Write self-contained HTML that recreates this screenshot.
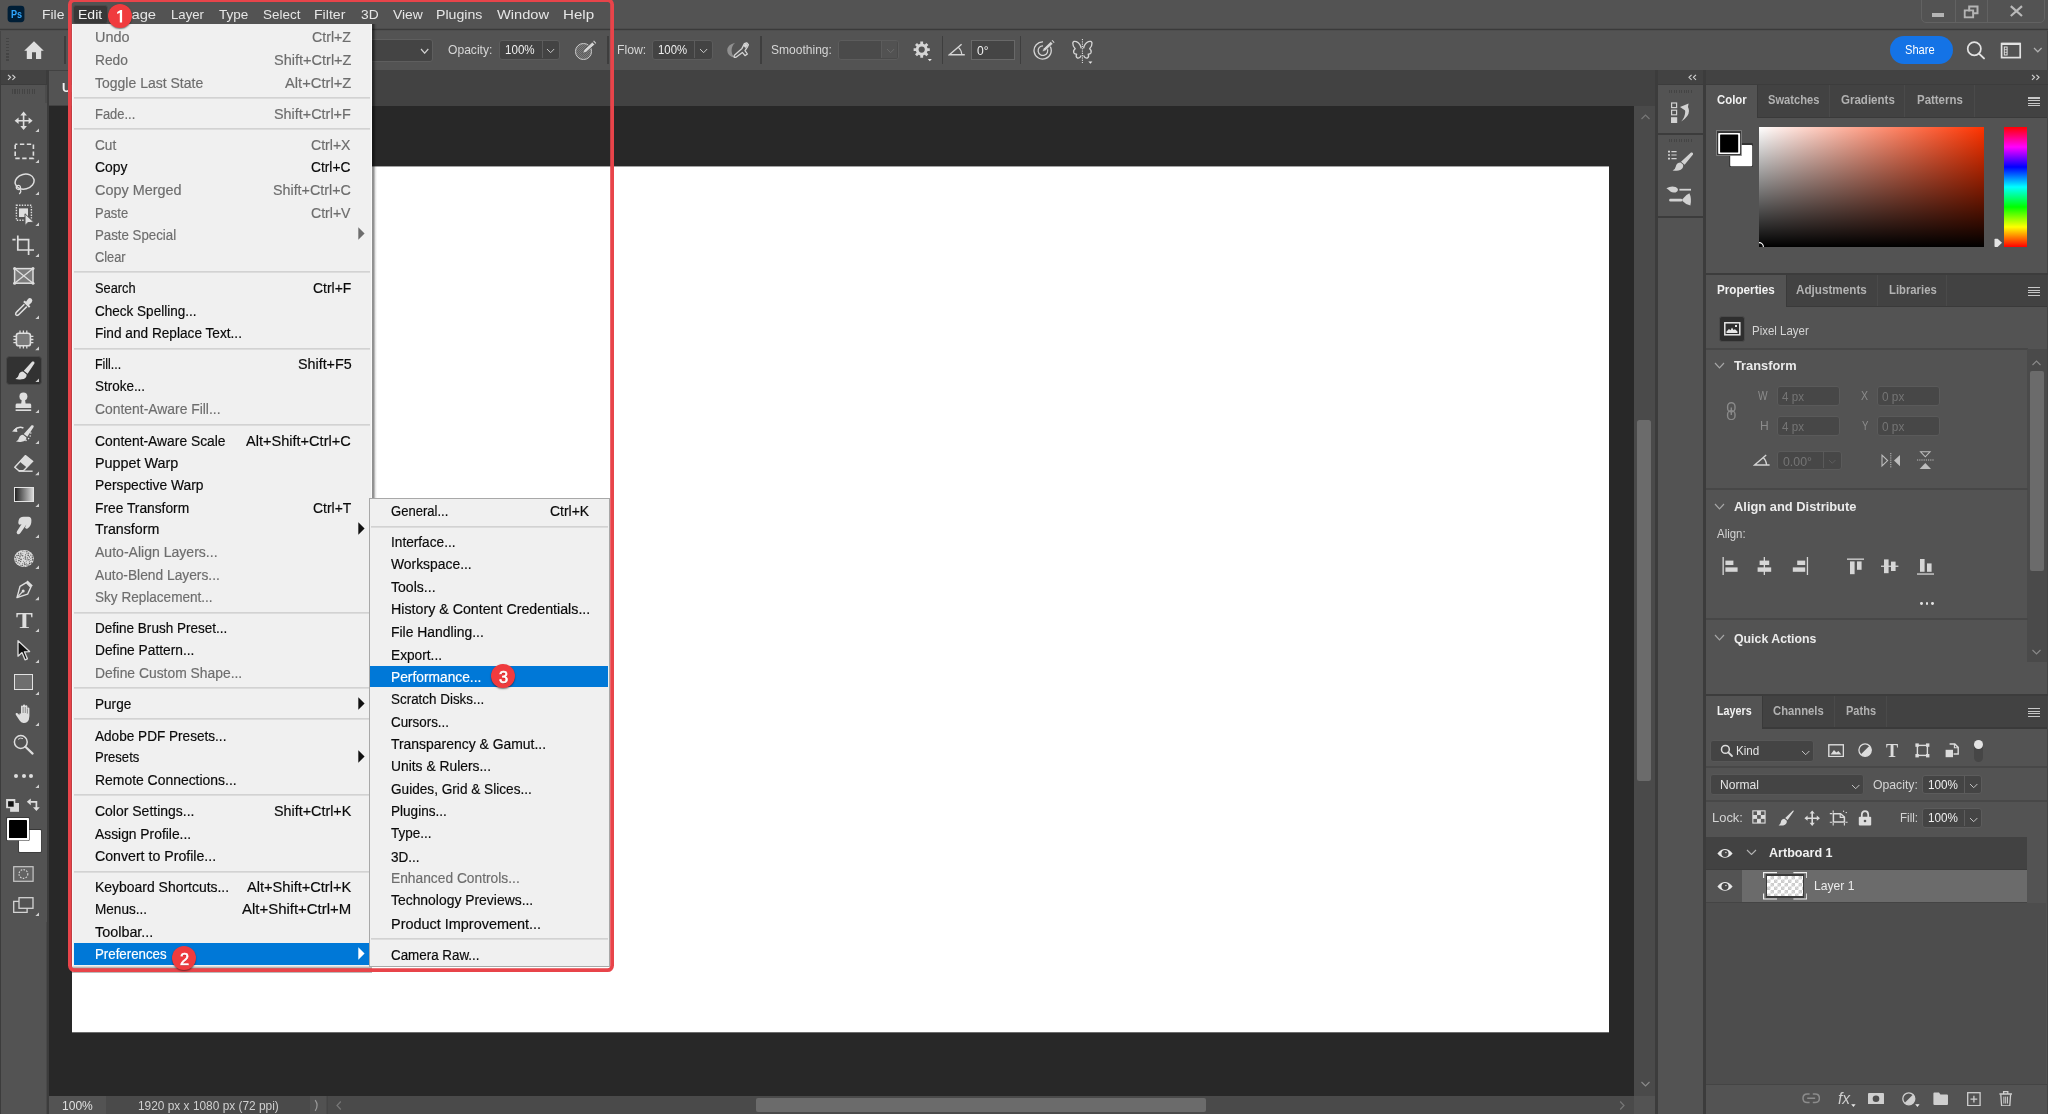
<!DOCTYPE html><html><head><meta charset="utf-8"><title>Photoshop</title><style>
html,body{margin:0;padding:0;background:#535353;}
html{width:2048px;height:1114px;overflow:hidden;}
body{width:2048px;height:1114px;position:relative;overflow:hidden;will-change:transform;font-family:"Liberation Sans",sans-serif;}
div,svg,span{position:absolute;display:block;box-sizing:border-box;}
span{white-space:pre;line-height:1;transform-origin:0 0;}
</style></head><body>
<div style="left:0px;top:0px;width:2048px;height:29px;background:#535353;"></div>
<div style="left:0px;top:28px;width:2048px;height:1px;background:#4c4c4c;"></div>
<div style="left:0px;top:29px;width:2048px;height:1px;background:#3a3a3a;"></div>
<div style="left:0px;top:30px;width:2048px;height:1px;background:#4e4e4e;"></div>
<div style="left:1px;top:31px;width:2046px;height:38.5px;background:#535353;"></div>
<div style="left:0px;top:30.5px;width:1px;height:39px;background:#454545;"></div>
<div style="left:2047px;top:30.5px;width:1px;height:39px;background:#454545;"></div>
<div style="left:0px;top:69.5px;width:2048px;height:36px;background:#424242;"></div>
<div style="left:49px;top:105.5px;width:1585px;height:990px;background:#282828;"></div>
<div style="left:72px;top:167px;width:1537px;height:865px;background:#ffffff;"></div>
<div style="left:72px;top:166px;width:1537px;height:1px;background:#a2a2a2;"></div>
<div style="left:72px;top:1032px;width:1537px;height:1px;background:#6c6c6c;"></div>
<div style="left:1634px;top:105.5px;width:20.5px;height:990px;background:#4a4a4a;"></div>
<div style="left:1637px;top:419.5px;width:14.3px;height:361.3px;background:#6b6b6b;border-radius:2.5px;"></div>
<div style="left:49px;top:1095.5px;width:1605.5px;height:18.5px;background:#4a4a4a;"></div>
<div style="left:49px;top:1095.5px;width:57px;height:18.5px;background:#535353;"></div>
<div style="left:310.3px;top:1095.5px;width:16.2px;height:18.5px;background:#515151;"></div>
<div style="left:326.5px;top:1095.5px;width:1px;height:18.5px;background:#444;"></div>
<div style="left:756px;top:1097.5px;width:449.5px;height:14.5px;background:#6b6b6b;border-radius:2px;"></div>
<div style="left:1634px;top:1095.5px;width:20.5px;height:18.5px;background:#535353;"></div>
<div style="left:0px;top:69.5px;width:49px;height:1044.5px;background:#3c3c3c;"></div>
<div style="left:1.2px;top:70.4px;width:45.2px;height:14px;background:#424242;"></div>
<div style="left:1.2px;top:85.3px;width:45.8px;height:1028.7px;background:#535353;"></div>
<div style="left:45.4px;top:85.3px;width:1.6px;height:18px;background:#4b4b4b;"></div>
<div style="left:45.6px;top:922px;width:1.4px;height:192px;background:#494949;"></div>
<div style="left:49.2px;top:71px;width:290px;height:33.5px;background:#535353;"></div>
<div style="left:1654.5px;top:69.5px;width:3px;height:1044.5px;background:#3c3c3c;"></div>
<div style="left:1657.5px;top:69.5px;width:45.5px;height:1044.5px;background:#535353;"></div>
<div style="left:1657.5px;top:69.5px;width:45.5px;height:14.5px;background:#424242;"></div>
<div style="left:1657.5px;top:84px;width:45.5px;height:1.2px;background:#3c3c3c;"></div>
<div style="left:1657.5px;top:132.8px;width:45.5px;height:1.8px;background:#3c3c3c;"></div>
<div style="left:1657.5px;top:216px;width:45.5px;height:1.8px;background:#3c3c3c;"></div>
<div style="left:1703px;top:69.5px;width:3px;height:1044.5px;background:#3c3c3c;"></div>
<div style="left:1706px;top:69.5px;width:342px;height:1044.5px;background:#535353;"></div>
<div style="left:1706px;top:69.5px;width:342px;height:14.5px;background:#424242;"></div>
<div style="left:2046.5px;top:69.5px;width:1.5px;height:1044.5px;background:#444;"></div>
<div style="left:1706px;top:83.5px;width:342px;height:1.5px;background:#3c3c3c;"></div>
<div style="left:1706px;top:85px;width:341px;height:33.3px;background:#424242;"></div>
<div style="left:1706px;top:117.3px;width:341px;height:1.2px;background:#3a3a3a;"></div>
<div style="left:1706px;top:85px;width:50.59999999999991px;height:33.8px;background:#535353;"></div>
<div style="left:1756.6px;top:85px;width:1px;height:33.3px;background:#3a3a3a;"></div>
<div style="left:1829.4px;top:85px;width:1px;height:32.3px;background:#4a4a4a;"></div>
<div style="left:1904.3px;top:85px;width:1px;height:32.3px;background:#4a4a4a;"></div>
<div style="left:1973.5px;top:85px;width:1px;height:32.3px;background:#4a4a4a;"></div>
<div style="left:2028px;top:97.3px;width:12px;height:1.3px;background:#c8c8c8;"></div>
<div style="left:2028px;top:99.89999999999999px;width:12px;height:1.3px;background:#c8c8c8;"></div>
<div style="left:2028px;top:102.5px;width:12px;height:1.3px;background:#c8c8c8;"></div>
<div style="left:2028px;top:105.1px;width:12px;height:1.3px;background:#c8c8c8;"></div>
<div style="left:1706px;top:273.1px;width:342px;height:1.5px;background:#3c3c3c;"></div>
<div style="left:1706px;top:274.6px;width:341px;height:32.7px;background:#424242;"></div>
<div style="left:1706px;top:306.3px;width:341px;height:1.2px;background:#3a3a3a;"></div>
<div style="left:1706px;top:274.6px;width:79.5px;height:33.2px;background:#535353;"></div>
<div style="left:1785.5px;top:274.6px;width:1px;height:32.7px;background:#3a3a3a;"></div>
<div style="left:1877.3px;top:274.6px;width:1px;height:31.700000000000003px;background:#4a4a4a;"></div>
<div style="left:1946.4px;top:274.6px;width:1px;height:31.700000000000003px;background:#4a4a4a;"></div>
<div style="left:2028px;top:286.90000000000003px;width:12px;height:1.3px;background:#c8c8c8;"></div>
<div style="left:2028px;top:289.50000000000006px;width:12px;height:1.3px;background:#c8c8c8;"></div>
<div style="left:2028px;top:292.1px;width:12px;height:1.3px;background:#c8c8c8;"></div>
<div style="left:2028px;top:294.70000000000005px;width:12px;height:1.3px;background:#c8c8c8;"></div>
<div style="left:1706px;top:694.2px;width:342px;height:1.5px;background:#3c3c3c;"></div>
<div style="left:1706px;top:695.7px;width:341px;height:32.7px;background:#424242;"></div>
<div style="left:1706px;top:727.4000000000001px;width:341px;height:1.2px;background:#3a3a3a;"></div>
<div style="left:1706px;top:695.7px;width:56.40000000000009px;height:33.2px;background:#535353;"></div>
<div style="left:1762.4px;top:695.7px;width:1px;height:32.7px;background:#3a3a3a;"></div>
<div style="left:1833.5px;top:695.7px;width:1px;height:31.700000000000003px;background:#4a4a4a;"></div>
<div style="left:1886.3px;top:695.7px;width:1px;height:31.700000000000003px;background:#4a4a4a;"></div>
<div style="left:2028px;top:708.0px;width:12px;height:1.3px;background:#c8c8c8;"></div>
<div style="left:2028px;top:710.6px;width:12px;height:1.3px;background:#c8c8c8;"></div>
<div style="left:2028px;top:713.2px;width:12px;height:1.3px;background:#c8c8c8;"></div>
<div style="left:2028px;top:715.8px;width:12px;height:1.3px;background:#c8c8c8;"></div>
<svg style="left:6px;top:4px;" width="20" height="20" viewBox="0 0 20 20"><rect x="1.6" y="1.8" width="16.8" height="16.4" rx="3.4" fill="#001e36"/></svg>
<span style="left:10.70px;top:9.00px;font-size:11px;color:#31a8ff;font-weight:bold;transform:scaleX(0.8248);">Ps</span>
<span style="left:41.68px;top:8.00px;font-size:13.6px;color:#e6e6e6;transform:scaleX(1.0224);">File</span>
<div style="left:73px;top:5px;width:35.3px;height:18.5px;background:#383838;border-radius:3px;border:1px solid #4a4a4a;"></div>
<span style="left:77.57px;top:8.00px;font-size:13.6px;color:#f2f2f2;transform:scaleX(1.0332);">Edit</span>
<span style="left:115.31px;top:8.00px;font-size:13.6px;color:#e6e6e6;transform:scaleX(1.0878);">Image</span>
<span style="left:170.53px;top:8.00px;font-size:13.6px;color:#e6e6e6;transform:scaleX(0.9708);">Layer</span>
<span style="left:219.30px;top:8.00px;font-size:13.6px;color:#e6e6e6;transform:scaleX(0.9927);">Type</span>
<span style="left:263.40px;top:8.00px;font-size:13.6px;color:#e6e6e6;transform:scaleX(0.9894);">Select</span>
<span style="left:314.16px;top:8.00px;font-size:13.6px;color:#e6e6e6;transform:scaleX(1.0377);">Filter</span>
<span style="left:360.50px;top:8.00px;font-size:13.6px;color:#e6e6e6;transform:scaleX(1.0137);">3D</span>
<span style="left:393.00px;top:8.00px;font-size:13.6px;color:#e6e6e6;transform:scaleX(1.0204);">View</span>
<span style="left:436.26px;top:8.00px;font-size:13.6px;color:#e6e6e6;transform:scaleX(1.0391);">Plugins</span>
<span style="left:497.40px;top:8.00px;font-size:13.6px;color:#e6e6e6;transform:scaleX(1.0756);">Window</span>
<span style="left:563.49px;top:8.00px;font-size:13.6px;color:#e6e6e6;transform:scaleX(1.1138);">Help</span>
<div style="left:1921px;top:-6px;width:123.5px;height:28.5px;border:1px solid #626262;border-radius:5px;"></div>
<div style="left:1954.5px;top:0px;width:1px;height:22px;background:#626262;"></div>
<div style="left:1987.3px;top:0px;width:1px;height:22px;background:#626262;"></div>
<div style="left:1932px;top:13px;width:12px;height:4px;background:#b4b4b4;"></div>
<svg style="left:1963px;top:5px;" width="17" height="14" viewBox="0 0 17 14"><path d="M6.2 1.5h8.3v6.8h-8.3z M1.8 5.6h8.3v6.6h-8.3z" fill="none" stroke="#b4b4b4" stroke-width="2"/><rect x="2.8" y="6.6" width="6.3" height="4.6" fill="#535353"/></svg>
<svg style="left:2009px;top:5px;" width="15" height="12" viewBox="0 0 15 12"><path d="M1.8 1.2 L13 11 M13 1.2 L1.8 11" stroke="#b9b9b9" stroke-width="2.2" fill="none"/></svg>
<div style="left:0;top:0;width:0;height:0;z-index:10;">
<div style="left:372px;top:24.3px;width:5px;height:474px;background:linear-gradient(to right,rgba(0,0,0,.44),rgba(0,0,0,.42) 36%,rgba(0,0,0,.12) 64%,rgba(0,0,0,0));"></div>
<div style="left:72px;top:24.3px;width:300.3px;height:942px;background:#fafafa;"></div>
<div style="left:73px;top:24.3px;width:298px;height:941.4px;background:#f0f0f0;"></div>
<div style="left:72px;top:966.4px;width:300px;height:3px;background:linear-gradient(to bottom,#e8e8e8,#8a8a8a);"></div>
<div style="left:72px;top:972px;width:300px;height:1px;background:#bcbcbc;"></div>
<span style="left:94.90px;top:30.00px;font-size:14.7px;color:#6d6d6d;transform:scaleX(0.9844);-webkit-text-stroke:0.18px #6d6d6d;">Undo</span>
<span style="left:312.10px;top:30.00px;font-size:14.7px;color:#6d6d6d;transform:scaleX(0.9649);-webkit-text-stroke:0.18px #6d6d6d;">Ctrl+Z</span>
<span style="left:94.90px;top:53.00px;font-size:14.7px;color:#6d6d6d;transform:scaleX(0.9386);-webkit-text-stroke:0.18px #6d6d6d;">Redo</span>
<span style="left:273.60px;top:53.00px;font-size:14.7px;color:#6d6d6d;transform:scaleX(0.9887);-webkit-text-stroke:0.18px #6d6d6d;">Shift+Ctrl+Z</span>
<span style="left:94.90px;top:76.00px;font-size:14.7px;color:#6d6d6d;transform:scaleX(0.9530);-webkit-text-stroke:0.18px #6d6d6d;">Toggle Last State</span>
<span style="left:284.80px;top:76.00px;font-size:14.7px;color:#6d6d6d;transform:scaleX(1.0025);-webkit-text-stroke:0.18px #6d6d6d;">Alt+Ctrl+Z</span>
<div style="left:74px;top:97px;width:296.3px;height:1px;background:#d2d2d2;"></div>
<div style="left:74px;top:98px;width:296.3px;height:1px;background:#dcdcdc;"></div>
<span style="left:94.90px;top:107.00px;font-size:14.7px;color:#6d6d6d;transform:scaleX(0.8804);-webkit-text-stroke:0.18px #6d6d6d;">Fade...</span>
<span style="left:274.30px;top:107.00px;font-size:14.7px;color:#6d6d6d;transform:scaleX(0.9798);-webkit-text-stroke:0.18px #6d6d6d;">Shift+Ctrl+F</span>
<div style="left:74px;top:128px;width:296.3px;height:1px;background:#d2d2d2;"></div>
<div style="left:74px;top:129px;width:296.3px;height:1px;background:#dcdcdc;"></div>
<span style="left:94.90px;top:138.00px;font-size:14.7px;color:#6d6d6d;transform:scaleX(0.9264);-webkit-text-stroke:0.18px #6d6d6d;">Cut</span>
<span style="left:311.40px;top:138.00px;font-size:14.7px;color:#6d6d6d;transform:scaleX(0.9585);-webkit-text-stroke:0.18px #6d6d6d;">Ctrl+X</span>
<span style="left:94.90px;top:160.00px;font-size:14.7px;color:#0a0a0a;transform:scaleX(0.9444);-webkit-text-stroke:0.18px #0a0a0a;">Copy</span>
<span style="left:311.40px;top:160.00px;font-size:14.7px;color:#0a0a0a;transform:scaleX(0.9359);-webkit-text-stroke:0.18px #0a0a0a;">Ctrl+C</span>
<span style="left:94.90px;top:183.00px;font-size:14.7px;color:#6d6d6d;transform:scaleX(0.9807);-webkit-text-stroke:0.18px #6d6d6d;">Copy Merged</span>
<span style="left:272.90px;top:183.00px;font-size:14.7px;color:#6d6d6d;transform:scaleX(0.9728);-webkit-text-stroke:0.18px #6d6d6d;">Shift+Ctrl+C</span>
<span style="left:94.90px;top:206.00px;font-size:14.7px;color:#6d6d6d;transform:scaleX(0.8826);-webkit-text-stroke:0.18px #6d6d6d;">Paste</span>
<span style="left:311.40px;top:206.00px;font-size:14.7px;color:#6d6d6d;transform:scaleX(0.9585);-webkit-text-stroke:0.18px #6d6d6d;">Ctrl+V</span>
<span style="left:94.90px;top:228.00px;font-size:14.7px;color:#6d6d6d;transform:scaleX(0.9034);-webkit-text-stroke:0.18px #6d6d6d;">Paste Special</span>
<svg style="left:358px;top:226.5px;" width="7" height="13" viewBox="0 0 7 13"><path d="M0.3 0.3 L6.6 6.5 L0.3 12.7z" fill="#6d6d6d"/></svg>
<span style="left:94.90px;top:250.00px;font-size:14.7px;color:#6d6d6d;transform:scaleX(0.8720);-webkit-text-stroke:0.18px #6d6d6d;">Clear</span>
<div style="left:74px;top:271px;width:296.3px;height:1px;background:#d2d2d2;"></div>
<div style="left:74px;top:272px;width:296.3px;height:1px;background:#dcdcdc;"></div>
<span style="left:94.90px;top:281.00px;font-size:14.7px;color:#0a0a0a;transform:scaleX(0.8734);-webkit-text-stroke:0.18px #0a0a0a;">Search</span>
<span style="left:312.80px;top:281.00px;font-size:14.7px;color:#0a0a0a;transform:scaleX(0.9476);-webkit-text-stroke:0.18px #0a0a0a;">Ctrl+F</span>
<span style="left:94.90px;top:304.00px;font-size:14.7px;color:#0a0a0a;transform:scaleX(0.9209);-webkit-text-stroke:0.18px #0a0a0a;">Check Spelling...</span>
<span style="left:94.90px;top:326.00px;font-size:14.7px;color:#0a0a0a;transform:scaleX(0.9294);-webkit-text-stroke:0.18px #0a0a0a;">Find and Replace Text...</span>
<div style="left:74px;top:348px;width:296.3px;height:1px;background:#d2d2d2;"></div>
<div style="left:74px;top:349px;width:296.3px;height:1px;background:#dcdcdc;"></div>
<span style="left:94.90px;top:357.00px;font-size:14.7px;color:#0a0a0a;transform:scaleX(0.8455);-webkit-text-stroke:0.18px #0a0a0a;">Fill...</span>
<span style="left:297.60px;top:357.00px;font-size:14.7px;color:#0a0a0a;transform:scaleX(0.9738);-webkit-text-stroke:0.18px #0a0a0a;">Shift+F5</span>
<span style="left:94.90px;top:379.00px;font-size:14.7px;color:#0a0a0a;transform:scaleX(0.9159);-webkit-text-stroke:0.18px #0a0a0a;">Stroke...</span>
<span style="left:94.90px;top:402.00px;font-size:14.7px;color:#6d6d6d;transform:scaleX(0.9453);-webkit-text-stroke:0.18px #6d6d6d;">Content-Aware Fill...</span>
<div style="left:74px;top:424px;width:296.3px;height:1px;background:#d2d2d2;"></div>
<div style="left:74px;top:425px;width:296.3px;height:1px;background:#dcdcdc;"></div>
<span style="left:94.90px;top:434.00px;font-size:14.7px;color:#0a0a0a;transform:scaleX(0.9425);-webkit-text-stroke:0.18px #0a0a0a;">Content-Aware Scale</span>
<span style="left:246.00px;top:434.00px;font-size:14.7px;color:#0a0a0a;transform:scaleX(0.9905);-webkit-text-stroke:0.18px #0a0a0a;">Alt+Shift+Ctrl+C</span>
<span style="left:94.90px;top:456.00px;font-size:14.7px;color:#0a0a0a;transform:scaleX(0.9787);-webkit-text-stroke:0.18px #0a0a0a;">Puppet Warp</span>
<span style="left:94.90px;top:478.00px;font-size:14.7px;color:#0a0a0a;transform:scaleX(0.9410);-webkit-text-stroke:0.18px #0a0a0a;">Perspective Warp</span>
<span style="left:94.90px;top:501.00px;font-size:14.7px;color:#0a0a0a;transform:scaleX(0.9381);-webkit-text-stroke:0.18px #0a0a0a;">Free Transform</span>
<span style="left:312.80px;top:501.00px;font-size:14.7px;color:#0a0a0a;transform:scaleX(0.9476);-webkit-text-stroke:0.18px #0a0a0a;">Ctrl+T</span>
<span style="left:94.90px;top:522.00px;font-size:14.7px;color:#0a0a0a;transform:scaleX(0.9692);-webkit-text-stroke:0.18px #0a0a0a;">Transform</span>
<svg style="left:358px;top:521.5px;" width="7" height="13" viewBox="0 0 7 13"><path d="M0.3 0.3 L6.6 6.5 L0.3 12.7z" fill="#111"/></svg>
<span style="left:94.90px;top:545.00px;font-size:14.7px;color:#6d6d6d;transform:scaleX(0.9560);-webkit-text-stroke:0.18px #6d6d6d;">Auto-Align Layers...</span>
<span style="left:94.90px;top:568.00px;font-size:14.7px;color:#6d6d6d;transform:scaleX(0.9379);-webkit-text-stroke:0.18px #6d6d6d;">Auto-Blend Layers...</span>
<span style="left:94.90px;top:590.00px;font-size:14.7px;color:#6d6d6d;transform:scaleX(0.9234);-webkit-text-stroke:0.18px #6d6d6d;">Sky Replacement...</span>
<div style="left:74px;top:612px;width:296.3px;height:1px;background:#d2d2d2;"></div>
<div style="left:74px;top:613px;width:296.3px;height:1px;background:#dcdcdc;"></div>
<span style="left:94.90px;top:621.00px;font-size:14.7px;color:#0a0a0a;transform:scaleX(0.9208);-webkit-text-stroke:0.18px #0a0a0a;">Define Brush Preset...</span>
<span style="left:94.90px;top:643.00px;font-size:14.7px;color:#0a0a0a;transform:scaleX(0.9367);-webkit-text-stroke:0.18px #0a0a0a;">Define Pattern...</span>
<span style="left:94.90px;top:666.00px;font-size:14.7px;color:#6d6d6d;transform:scaleX(0.9441);-webkit-text-stroke:0.18px #6d6d6d;">Define Custom Shape...</span>
<div style="left:74px;top:687px;width:296.3px;height:1px;background:#d2d2d2;"></div>
<div style="left:74px;top:688px;width:296.3px;height:1px;background:#dcdcdc;"></div>
<span style="left:94.90px;top:697.00px;font-size:14.7px;color:#0a0a0a;transform:scaleX(0.9251);-webkit-text-stroke:0.18px #0a0a0a;">Purge</span>
<svg style="left:358px;top:696.5px;" width="7" height="13" viewBox="0 0 7 13"><path d="M0.3 0.3 L6.6 6.5 L0.3 12.7z" fill="#111"/></svg>
<div style="left:74px;top:718px;width:296.3px;height:1px;background:#d2d2d2;"></div>
<div style="left:74px;top:719px;width:296.3px;height:1px;background:#dcdcdc;"></div>
<span style="left:94.90px;top:729.00px;font-size:14.7px;color:#0a0a0a;transform:scaleX(0.9251);-webkit-text-stroke:0.18px #0a0a0a;">Adobe PDF Presets...</span>
<span style="left:94.90px;top:750.00px;font-size:14.7px;color:#0a0a0a;transform:scaleX(0.8898);-webkit-text-stroke:0.18px #0a0a0a;">Presets</span>
<svg style="left:358px;top:749.5px;" width="7" height="13" viewBox="0 0 7 13"><path d="M0.3 0.3 L6.6 6.5 L0.3 12.7z" fill="#111"/></svg>
<span style="left:94.90px;top:773.00px;font-size:14.7px;color:#0a0a0a;transform:scaleX(0.9480);-webkit-text-stroke:0.18px #0a0a0a;">Remote Connections...</span>
<div style="left:74px;top:794px;width:296.3px;height:1px;background:#d2d2d2;"></div>
<div style="left:74px;top:795px;width:296.3px;height:1px;background:#dcdcdc;"></div>
<span style="left:94.90px;top:804.00px;font-size:14.7px;color:#0a0a0a;transform:scaleX(0.9516);-webkit-text-stroke:0.18px #0a0a0a;">Color Settings...</span>
<span style="left:273.60px;top:804.00px;font-size:14.7px;color:#0a0a0a;transform:scaleX(0.9762);-webkit-text-stroke:0.18px #0a0a0a;">Shift+Ctrl+K</span>
<span style="left:94.90px;top:827.00px;font-size:14.7px;color:#0a0a0a;transform:scaleX(0.9420);-webkit-text-stroke:0.18px #0a0a0a;">Assign Profile...</span>
<span style="left:94.90px;top:849.00px;font-size:14.7px;color:#0a0a0a;transform:scaleX(0.9636);-webkit-text-stroke:0.18px #0a0a0a;">Convert to Profile...</span>
<div style="left:74px;top:871px;width:296.3px;height:1px;background:#d2d2d2;"></div>
<div style="left:74px;top:872px;width:296.3px;height:1px;background:#dcdcdc;"></div>
<span style="left:94.90px;top:880.00px;font-size:14.7px;color:#0a0a0a;transform:scaleX(0.9496);-webkit-text-stroke:0.18px #0a0a0a;">Keyboard Shortcuts...</span>
<span style="left:246.70px;top:880.00px;font-size:14.7px;color:#0a0a0a;transform:scaleX(0.9933);-webkit-text-stroke:0.18px #0a0a0a;">Alt+Shift+Ctrl+K</span>
<span style="left:94.90px;top:902.00px;font-size:14.7px;color:#0a0a0a;transform:scaleX(0.9232);-webkit-text-stroke:0.18px #0a0a0a;">Menus...</span>
<span style="left:242.10px;top:902.00px;font-size:14.7px;color:#0a0a0a;transform:scaleX(1.0177);-webkit-text-stroke:0.18px #0a0a0a;">Alt+Shift+Ctrl+M</span>
<span style="left:94.90px;top:925.00px;font-size:14.7px;color:#0a0a0a;transform:scaleX(0.9791);-webkit-text-stroke:0.18px #0a0a0a;">Toolbar...</span>
<div style="left:74px;top:943.2px;width:295px;height:21.6px;background:#0078d7;"></div>
<span style="left:94.90px;top:947.00px;font-size:14.7px;color:#ffffff;transform:scaleX(0.9043);-webkit-text-stroke:0.18px #ffffff;">Preferences</span>
<svg style="left:358px;top:946.5px;" width="7" height="13" viewBox="0 0 7 13"><path d="M0.3 0.3 L6.6 6.5 L0.3 12.7z" fill="#ffffff"/></svg>
<div style="left:368.5px;top:497.8px;width:241.3px;height:469px;background:#a8a8a8;"></div>
<div style="left:369.5px;top:498.8px;width:239.8px;height:467.4px;background:#f0f0f0;"></div>
<span style="left:391.20px;top:504.00px;font-size:14.7px;color:#0a0a0a;transform:scaleX(0.8878);-webkit-text-stroke:0.18px #0a0a0a;">General...</span>
<span style="left:549.60px;top:504.00px;font-size:14.7px;color:#0a0a0a;transform:scaleX(0.9488);-webkit-text-stroke:0.18px #0a0a0a;">Ctrl+K</span>
<div style="left:371px;top:526px;width:236.5px;height:1px;background:#d2d2d2;"></div>
<div style="left:371px;top:527px;width:236.5px;height:1px;background:#dcdcdc;"></div>
<span style="left:391.20px;top:535.00px;font-size:14.7px;color:#0a0a0a;transform:scaleX(0.9296);-webkit-text-stroke:0.18px #0a0a0a;">Interface...</span>
<span style="left:391.20px;top:557.00px;font-size:14.7px;color:#0a0a0a;transform:scaleX(0.9448);-webkit-text-stroke:0.18px #0a0a0a;">Workspace...</span>
<span style="left:391.20px;top:580.00px;font-size:14.7px;color:#0a0a0a;transform:scaleX(0.9571);-webkit-text-stroke:0.18px #0a0a0a;">Tools...</span>
<span style="left:391.20px;top:602.00px;font-size:14.7px;color:#0a0a0a;transform:scaleX(0.9686);-webkit-text-stroke:0.18px #0a0a0a;">History &amp; Content Credentials...</span>
<span style="left:391.20px;top:625.00px;font-size:14.7px;color:#0a0a0a;transform:scaleX(0.9475);-webkit-text-stroke:0.18px #0a0a0a;">File Handling...</span>
<span style="left:391.20px;top:648.00px;font-size:14.7px;color:#0a0a0a;transform:scaleX(0.9327);-webkit-text-stroke:0.18px #0a0a0a;">Export...</span>
<div style="left:370.2px;top:666.2px;width:237.8px;height:20.6px;background:#0078d7;"></div>
<span style="left:391.20px;top:670.00px;font-size:14.7px;color:#ffffff;transform:scaleX(0.9376);-webkit-text-stroke:0.18px #ffffff;">Performance...</span>
<span style="left:391.20px;top:692.00px;font-size:14.7px;color:#0a0a0a;transform:scaleX(0.9135);-webkit-text-stroke:0.18px #0a0a0a;">Scratch Disks...</span>
<span style="left:391.20px;top:715.00px;font-size:14.7px;color:#0a0a0a;transform:scaleX(0.9109);-webkit-text-stroke:0.18px #0a0a0a;">Cursors...</span>
<span style="left:391.20px;top:737.00px;font-size:14.7px;color:#0a0a0a;transform:scaleX(0.9480);-webkit-text-stroke:0.18px #0a0a0a;">Transparency &amp; Gamut...</span>
<span style="left:391.20px;top:759.00px;font-size:14.7px;color:#0a0a0a;transform:scaleX(0.9426);-webkit-text-stroke:0.18px #0a0a0a;">Units &amp; Rulers...</span>
<span style="left:391.20px;top:782.00px;font-size:14.7px;color:#0a0a0a;transform:scaleX(0.9274);-webkit-text-stroke:0.18px #0a0a0a;">Guides, Grid &amp; Slices...</span>
<span style="left:391.20px;top:804.00px;font-size:14.7px;color:#0a0a0a;transform:scaleX(0.9236);-webkit-text-stroke:0.18px #0a0a0a;">Plugins...</span>
<span style="left:391.20px;top:826.00px;font-size:14.7px;color:#0a0a0a;transform:scaleX(0.9185);-webkit-text-stroke:0.18px #0a0a0a;">Type...</span>
<span style="left:391.20px;top:850.00px;font-size:14.7px;color:#0a0a0a;transform:scaleX(0.9219);-webkit-text-stroke:0.18px #0a0a0a;">3D...</span>
<span style="left:391.20px;top:871.00px;font-size:14.7px;color:#6d6d6d;transform:scaleX(0.9384);-webkit-text-stroke:0.18px #6d6d6d;">Enhanced Controls...</span>
<span style="left:391.20px;top:893.00px;font-size:14.7px;color:#0a0a0a;transform:scaleX(0.9468);-webkit-text-stroke:0.18px #0a0a0a;">Technology Previews...</span>
<span style="left:391.20px;top:917.00px;font-size:14.7px;color:#0a0a0a;transform:scaleX(0.9831);-webkit-text-stroke:0.18px #0a0a0a;">Product Improvement...</span>
<div style="left:371px;top:938px;width:236.5px;height:1px;background:#d2d2d2;"></div>
<div style="left:371px;top:939px;width:236.5px;height:1px;background:#dcdcdc;"></div>
<span style="left:391.20px;top:948.00px;font-size:14.7px;color:#0a0a0a;transform:scaleX(0.9110);-webkit-text-stroke:0.18px #0a0a0a;">Camera Raw...</span>
<svg style="left:60px;top:0px;" width="560" height="980" viewBox="0 0 560 980"><rect x="9.9" y="0.1" width="542.2" height="970" rx="4.5" fill="none" stroke="#e8444a" stroke-width="3.8"/></svg>
<div style="left:107.8px;top:3.700000000000001px;width:24.4px;height:24.4px;border-radius:50%;background:#f03b3e;box-shadow:0 1px 1.6px rgba(0,0,0,.5);"></div>
<svg style="left:114px;top:7.9px;" width="12" height="16" viewBox="0 0 12 16"><path d="M8.1 1.9 V14.5 H5.8 V4.7 L3.2 6.1 V4 L6.4 1.9z" fill="#fff"/></svg>
<div style="left:171.9px;top:946.0999999999999px;width:24.4px;height:24.4px;border-radius:50%;background:#f03b3e;box-shadow:0 1px 1.6px rgba(0,0,0,.5);"></div>
<span style="left:179.80px;top:951.00px;font-size:17.3px;color:#ffffff;transform:scaleX(0.9444);-webkit-text-stroke:0.65px #fff;text-shadow:0 0.7px 0.6px rgba(130,0,0,.55);">2</span>
<div style="left:491.0px;top:664.0999999999999px;width:24.4px;height:24.4px;border-radius:50%;background:#f03b3e;box-shadow:0 1px 1.6px rgba(0,0,0,.5);"></div>
<span style="left:498.90px;top:669.00px;font-size:17.3px;color:#ffffff;transform:scaleX(0.9444);-webkit-text-stroke:0.65px #fff;text-shadow:0 0.7px 0.6px rgba(130,0,0,.55);">3</span>
</div>
<div style="left:6.2px;top:38.0px;width:3px;height:1.3px;background:#444;"></div>
<div style="left:6.2px;top:41.05px;width:3px;height:1.3px;background:#444;"></div>
<div style="left:6.2px;top:44.1px;width:3px;height:1.3px;background:#444;"></div>
<div style="left:6.2px;top:47.15px;width:3px;height:1.3px;background:#444;"></div>
<div style="left:6.2px;top:50.2px;width:3px;height:1.3px;background:#444;"></div>
<div style="left:6.2px;top:53.25px;width:3px;height:1.3px;background:#444;"></div>
<div style="left:6.2px;top:56.3px;width:3px;height:1.3px;background:#444;"></div>
<div style="left:6.2px;top:59.349999999999994px;width:3px;height:1.3px;background:#444;"></div>
<svg style="left:24px;top:40.5px;" width="20" height="18.5" viewBox="0 0 20 18.5"><path d="M10 0.3 L19.8 9.8 H17.2 V18 H12 V11.3 H8 V18 H2.8 V9.8 H0.2z" fill="#dedede"/></svg>
<div style="left:64.0px;top:36px;width:1.8px;height:27.5px;background:#3e3e3e;"></div>
<div style="left:299.5px;top:38.7px;width:133.2px;height:23px;background:#444444;border:1px solid #5e5e5e;border-radius:3px;"></div>
<svg style="left:419.55px;top:48.199999999999996px;" width="9.3" height="6.2" viewBox="0 0 9.3 6.2"><path d="M1 1 L4.65 5.2 L8.3 1" fill="none" stroke="#d0d0d0" stroke-width="1.2"/></svg>
<span style="left:448.30px;top:43.00px;font-size:13px;color:#d6d6d6;transform:scaleX(0.9305);">Opacity:</span>
<div style="left:499.0px;top:39.5px;width:60.6px;height:20px;background:#434343;border:1px solid #5c5c5c;border-radius:3px;"></div>
<div style="left:541.6px;top:41px;width:1px;height:17px;background:#5c5c5c;"></div>
<span style="left:505.00px;top:44.00px;font-size:12px;color:#f0f0f0;transform:scaleX(0.9671);">100%</span>
<svg style="left:546.4px;top:47.75px;" width="9.2" height="5.7" viewBox="0 0 9.2 5.7"><path d="M1 1 L4.6 4.7 L8.2 1" fill="none" stroke="#c8c8c8" stroke-width="1.0"/></svg>
<div style="left:607.0px;top:36px;width:1.8px;height:27.5px;background:#3e3e3e;"></div>
<span style="left:616.96px;top:43.00px;font-size:13px;color:#d6d6d6;transform:scaleX(0.9407);">Flow:</span>
<div style="left:652.2px;top:39.5px;width:60.6px;height:20px;background:#434343;border:1px solid #5c5c5c;border-radius:3px;"></div>
<div style="left:694.2px;top:41px;width:1px;height:17px;background:#5c5c5c;"></div>
<span style="left:658.00px;top:44.00px;font-size:12px;color:#f0f0f0;transform:scaleX(0.9477);">100%</span>
<svg style="left:699.0px;top:47.75px;" width="9.2" height="5.7" viewBox="0 0 9.2 5.7"><path d="M1 1 L4.6 4.7 L8.2 1" fill="none" stroke="#c8c8c8" stroke-width="1.0"/></svg>
<div style="left:760.2px;top:36px;width:1.8px;height:27.5px;background:#3e3e3e;"></div>
<span style="left:771.30px;top:43.00px;font-size:13px;color:#d6d6d6;transform:scaleX(0.9256);">Smoothing:</span>
<div style="left:838.4px;top:39.5px;width:60.6px;height:20px;background:#4a4a4a;border:1px solid #5c5c5c;border-radius:3px;"></div>
<div style="left:881.2px;top:41px;width:1px;height:17px;background:#5c5c5c;"></div>
<div style="left:882.2px;top:41px;width:15.3px;height:17px;background:#525252;"></div>
<svg style="left:886.0px;top:47.75px;" width="9.2" height="5.7" viewBox="0 0 9.2 5.7"><path d="M1 1 L4.6 4.7 L8.2 1" fill="none" stroke="#6a6a6a" stroke-width="1.0"/></svg>
<div style="left:941.6px;top:36px;width:1.8px;height:27.5px;background:#3e3e3e;"></div>
<div style="left:971px;top:40px;width:43.6px;height:20px;background:#454545;border:1px solid #686868;"></div>
<span style="left:976.60px;top:45.00px;font-size:12.4px;color:#f0f0f0;transform:scaleX(0.9755);">0°</span>
<div style="left:1019.5px;top:36px;width:1.8px;height:27.5px;background:#3e3e3e;"></div>
<div style="left:1889.7px;top:35.9px;width:63.5px;height:28.2px;border-radius:14.1px;background:#1473e6;"></div>
<span style="left:1905.00px;top:44.00px;font-size:12.8px;color:#ffffff;transform:scaleX(0.8669);">Share</span>
<svg style="left:1965px;top:40px;" width="21" height="21" viewBox="0 0 21 21"><circle cx="9.3" cy="8.8" r="6.6" fill="none" stroke="#e2e2e2" stroke-width="1.7"/><path d="M14 13.6 L19 18.4" stroke="#e2e2e2" stroke-width="2" stroke-linecap="round"/></svg>
<svg style="left:2000px;top:42px;" width="22" height="17" viewBox="0 0 22 17"><rect x="1.6" y="1.6" width="18.6" height="14" fill="none" stroke="#e2e2e2" stroke-width="1.7"/><rect x="1.6" y="0.8" width="18.6" height="2.2" fill="#e2e2e2"/><rect x="4.3" y="5" width="2.8" height="8" fill="none" stroke="#e2e2e2" stroke-width="1"/><path d="M4.3 7.7h2.8M4.3 10.3h2.8" stroke="#e2e2e2" stroke-width="0.8"/></svg>
<svg style="left:2032.9px;top:47.4px;" width="9.6" height="5.8" viewBox="0 0 9.6 5.8"><path d="M1 1 L4.8 4.8 L8.6 1" fill="none" stroke="#b0b0b0" stroke-width="1.2"/></svg>
<span style="left:61.70px;top:1100.00px;font-size:12.6px;color:#e0e0e0;transform:scaleX(0.9559);">100%</span>
<span style="left:137.80px;top:1100.00px;font-size:12.4px;color:#d0d0d0;transform:scaleX(0.9598);">1920 px x 1080 px (72 ppi)</span>
<svg style="left:313px;top:1099px;" width="8" height="13" viewBox="0 0 8 13"><path d="M2.2 1.2 C4.6 4.5 4.6 8.5 2.2 11.8" fill="none" stroke="#9a9a9a" stroke-width="1.2"/></svg>
<svg style="left:335px;top:1100px;" width="8" height="11" viewBox="0 0 8 11"><path d="M5.8 1.5 L2 5.5 L5.8 9.5" fill="none" stroke="#777" stroke-width="1.2"/></svg>
<svg style="left:1618px;top:1100px;" width="8" height="11" viewBox="0 0 8 11"><path d="M2.2 1.5 L6 5.5 L2.2 9.5" fill="none" stroke="#777" stroke-width="1.2"/></svg>
<svg style="left:1640px;top:113px;" width="11" height="8" viewBox="0 0 11 8"><path d="M1.5 6 L5.5 2 L9.5 6" fill="none" stroke="#777" stroke-width="1.2"/></svg>
<svg style="left:1640px;top:1079.5px;" width="11" height="8" viewBox="0 0 11 8"><path d="M1.5 2 L5.5 6 L9.5 2" fill="none" stroke="#8a8a8a" stroke-width="1.2"/></svg>
<span style="left:61.70px;top:81.00px;font-size:13.2px;color:#f4f4f4;font-weight:bold;transform:scaleX(0.9500);">Untitled-1 @ 100% (Layer 1, RGB/8)</span>
<svg style="left:7.4px;top:74px;" width="9" height="7" viewBox="0 0 9 7"><path d="M1 0.8 L3.6 3.3 L1 5.8 M5.4 0.8 L8 3.3 L5.4 5.8" fill="none" stroke="#d0d0d0" stroke-width="1.15"/></svg>
<svg style="left:1687.8px;top:74px;" width="9" height="7" viewBox="0 0 9 7"><path d="M3.6 0.8 L1 3.3 L3.6 5.8 M8 0.8 L5.4 3.3 L8 5.8" fill="none" stroke="#d0d0d0" stroke-width="1.15"/></svg>
<svg style="left:2031.4px;top:74px;" width="9" height="7" viewBox="0 0 9 7"><path d="M1 0.8 L3.6 3.3 L1 5.8 M5.4 0.8 L8 3.3 L5.4 5.8" fill="none" stroke="#d0d0d0" stroke-width="1.15"/></svg>
<span style="left:1717.00px;top:94.00px;font-size:12.6px;color:#f2f2f2;font-weight:bold;transform:scaleX(0.9036);">Color</span>
<span style="left:1767.50px;top:94.00px;font-size:12.6px;color:#b2b2b2;font-weight:bold;transform:scaleX(0.8848);">Swatches</span>
<span style="left:1840.70px;top:94.00px;font-size:12.6px;color:#b2b2b2;font-weight:bold;transform:scaleX(0.9152);">Gradients</span>
<span style="left:1916.80px;top:94.00px;font-size:12.6px;color:#b2b2b2;font-weight:bold;transform:scaleX(0.9089);">Patterns</span>
<span style="left:1717.20px;top:284.00px;font-size:12.6px;color:#f2f2f2;font-weight:bold;transform:scaleX(0.9279);">Properties</span>
<span style="left:1796.40px;top:284.00px;font-size:12.6px;color:#b2b2b2;font-weight:bold;transform:scaleX(0.9283);">Adjustments</span>
<span style="left:1888.70px;top:284.00px;font-size:12.6px;color:#b2b2b2;font-weight:bold;transform:scaleX(0.8967);">Libraries</span>
<span style="left:1717.20px;top:705.00px;font-size:12.6px;color:#f2f2f2;font-weight:bold;transform:scaleX(0.8521);">Layers</span>
<span style="left:1773.30px;top:705.00px;font-size:12.6px;color:#b2b2b2;font-weight:bold;transform:scaleX(0.8945);">Channels</span>
<span style="left:1845.50px;top:705.00px;font-size:12.6px;color:#b2b2b2;font-weight:bold;transform:scaleX(0.8749);">Paths</span>
<svg style="left:1714px;top:128px;" width="42" height="42" viewBox="0 0 42 42"><rect x="15.2" y="15" width="23.7" height="23.9" rx="1" fill="#343434"/><rect x="16.2" y="16.9" width="22" height="21.3" rx="1" fill="#fff"/><rect x="2.1" y="2.1" width="25.7" height="25.8" fill="#808080"/><rect x="3" y="3.1" width="24" height="23.8" fill="#343434"/><rect x="4.2" y="4.9" width="21.9" height="21.2" rx="0.8" fill="#fff"/><rect x="6.1" y="6.4" width="18.1" height="18.2" rx="0.6" fill="#000"/></svg>
<div style="left:1759px;top:127px;width:225px;height:120px;background:linear-gradient(to bottom,rgba(0,0,0,0),#000),linear-gradient(to right,#fff,#ff3300);"></div>
<svg style="left:1759px;top:238px;" width="10" height="9" viewBox="0 0 10 9"><circle cx="0" cy="9" r="4.4" fill="none" stroke="#fff" stroke-width="1.1"/></svg>
<div style="left:2004px;top:127px;width:23.3px;height:120px;background:linear-gradient(to bottom,#ff0000 0%,#ff00ff 16.67%,#0000ff 33.33%,#00ffff 50%,#00ff00 66.67%,#ffff00 83.33%,#ff0000 100%);"></div>
<svg style="left:1993.5px;top:238px;" width="9" height="10" viewBox="0 0 9 10"><path d="M1.2 0.8 H3.6 L8 4.8 L3.6 8.9 H1.2 Q0.5 8.9 0.5 8.2 V1.5 Q0.5 0.8 1.2 0.8z" fill="#e4e4e4"/></svg>
<div style="left:1718.9px;top:315.8px;width:26.4px;height:26px;background:#2e2e2e;border-radius:3px;border:1px solid #4a4a4a;"></div>
<svg style="left:1724px;top:321.5px;" width="17" height="14" viewBox="0 0 17 14"><rect x="0.8" y="0.8" width="15" height="12" fill="none" stroke="#e6e6e6" stroke-width="1.5"/><path d="M2.5 11 L2.5 9.5 L5 7 L6.5 8.2 L8 5.6 L9.5 8 L11 7.2 L13.5 9.6 V11z" fill="#e6e6e6"/><rect x="11" y="3" width="2" height="2" fill="#e6e6e6"/></svg>
<span style="left:1752.32px;top:324.00px;font-size:13px;color:#d4d4d4;transform:scaleX(0.8831);">Pixel Layer</span>
<div style="left:1706px;top:348px;width:321.5px;height:2px;background:#474747;"></div>
<div style="left:2027px;top:349.4px;width:19.5px;height:312.6px;background:#4a4a4a;"></div>
<div style="left:2029.8px;top:370.6px;width:14.2px;height:200px;background:#6b6b6b;border-radius:2px;"></div>
<svg style="left:2031px;top:359px;" width="11" height="8" viewBox="0 0 11 8"><path d="M1.5 6 L5.5 2 L9.5 6" fill="none" stroke="#8a8a8a" stroke-width="1.1"/></svg>
<svg style="left:2031px;top:647.5px;" width="11" height="8" viewBox="0 0 11 8"><path d="M1.5 2 L5.5 6 L9.5 2" fill="none" stroke="#8a8a8a" stroke-width="1.1"/></svg>
<svg style="left:1713.5px;top:362.0px;" width="11" height="6.8" viewBox="0 0 11 6.8"><path d="M1 1 L5.5 5.8 L10 1" fill="none" stroke="#a6a6a6" stroke-width="1.2"/></svg>
<span style="left:1733.70px;top:359.00px;font-size:13px;color:#ebebeb;font-weight:bold;transform:scaleX(0.9855);">Transform</span>
<span style="left:1758.00px;top:389.00px;font-size:13px;color:#8c8c8c;transform:scaleX(0.7846);">W</span>
<div style="left:1777.0px;top:386.0px;width:63.2px;height:19.8px;background:#474747;border:1px solid #5a5a5a;border-radius:3px;"></div>
<span style="left:1782.00px;top:390.00px;font-size:13px;color:#757575;transform:scaleX(0.8934);">4 px</span>
<span style="left:1861.40px;top:389.00px;font-size:13px;color:#8c8c8c;transform:scaleX(0.8111);">X</span>
<div style="left:1876.8px;top:386.0px;width:63.3px;height:19.8px;background:#474747;border:1px solid #5a5a5a;border-radius:3px;"></div>
<span style="left:1881.60px;top:390.00px;font-size:13px;color:#757575;transform:scaleX(0.9094);">0 px</span>
<span style="left:1760.08px;top:419.00px;font-size:13px;color:#8c8c8c;transform:scaleX(0.9250);">H</span>
<div style="left:1777.0px;top:416.3px;width:63.2px;height:19.6px;background:#474747;border:1px solid #5a5a5a;border-radius:3px;"></div>
<span style="left:1782.00px;top:420.00px;font-size:13px;color:#757575;transform:scaleX(0.8934);">4 px</span>
<span style="left:1862.00px;top:419.00px;font-size:13px;color:#8c8c8c;transform:scaleX(0.7444);">Y</span>
<div style="left:1876.8px;top:416.3px;width:63.3px;height:19.6px;background:#474747;border:1px solid #5a5a5a;border-radius:3px;"></div>
<span style="left:1881.60px;top:420.00px;font-size:13px;color:#757575;transform:scaleX(0.9094);">0 px</span>
<div style="left:1777.0px;top:450.9px;width:64.6px;height:19px;background:#474747;border:1px solid #5a5a5a;border-radius:3px;"></div>
<div style="left:1823px;top:452.4px;width:1px;height:16px;background:#5a5a5a;"></div>
<span style="left:1782.60px;top:455.00px;font-size:13px;color:#757575;transform:scaleX(0.9504);">0.00°</span>
<svg style="left:1828.05px;top:458.85px;" width="8.5" height="5.3" viewBox="0 0 8.5 5.3"><path d="M1 1 L4.25 4.3 L7.5 1" fill="none" stroke="#5e5e5e" stroke-width="1.0"/></svg>
<div style="left:1706px;top:488px;width:321.5px;height:2px;background:#474747;"></div>
<svg style="left:1713.5px;top:502.90000000000003px;" width="11" height="6.8" viewBox="0 0 11 6.8"><path d="M1 1 L5.5 5.8 L10 1" fill="none" stroke="#a6a6a6" stroke-width="1.2"/></svg>
<span style="left:1733.70px;top:500.00px;font-size:13px;color:#ebebeb;font-weight:bold;transform:scaleX(0.9913);">Align and Distribute</span>
<span style="left:1717.20px;top:527.00px;font-size:13px;color:#d4d4d4;transform:scaleX(0.8807);">Align:</span>
<div style="left:1920.0px;top:602.4px;width:2.8px;height:2.8px;border-radius:50%;background:#e2e2e2;"></div>
<div style="left:1925.6999999999998px;top:602.4px;width:2.8px;height:2.8px;border-radius:50%;background:#e2e2e2;"></div>
<div style="left:1931.3999999999999px;top:602.4px;width:2.8px;height:2.8px;border-radius:50%;background:#e2e2e2;"></div>
<div style="left:1706px;top:618px;width:321.5px;height:2px;background:#474747;"></div>
<svg style="left:1713.5px;top:634.2px;" width="11" height="6.8" viewBox="0 0 11 6.8"><path d="M1 1 L5.5 5.8 L10 1" fill="none" stroke="#a6a6a6" stroke-width="1.2"/></svg>
<span style="left:1733.70px;top:632.00px;font-size:13px;color:#ebebeb;font-weight:bold;transform:scaleX(0.9486);">Quick Actions</span>
<div style="left:1710.3px;top:740.3px;width:103.4px;height:21.6px;background:#444444;border:1px solid #575757;border-radius:3px;"></div>
<svg style="left:1720px;top:744px;" width="14" height="14" viewBox="0 0 14 14"><circle cx="5.4" cy="5.4" r="3.9" fill="none" stroke="#dcdcdc" stroke-width="1.5"/><path d="M8.3 8.3 L12 12" stroke="#dcdcdc" stroke-width="1.8" stroke-linecap="round"/></svg>
<span style="left:1736.00px;top:744.00px;font-size:13px;color:#e4e4e4;transform:scaleX(0.8956);">Kind</span>
<svg style="left:1800.7px;top:749.75px;" width="9.4" height="5.7" viewBox="0 0 9.4 5.7"><path d="M1 1 L4.7 4.7 L8.4 1" fill="none" stroke="#c4c4c4" stroke-width="1.0"/></svg>
<div style="left:1706px;top:766px;width:341px;height:2px;background:#484848;"></div>
<div style="left:1710.3px;top:774.1px;width:154px;height:21.4px;background:#444444;border:1px solid #575757;border-radius:3px;"></div>
<span style="left:1719.67px;top:778.00px;font-size:13px;color:#e4e4e4;transform:scaleX(0.9267);">Normal</span>
<svg style="left:1851.1px;top:783.65px;" width="9.4" height="5.7" viewBox="0 0 9.4 5.7"><path d="M1 1 L4.7 4.7 L8.4 1" fill="none" stroke="#c4c4c4" stroke-width="1.0"/></svg>
<span style="left:1872.70px;top:778.00px;font-size:13px;color:#d4d4d4;transform:scaleX(0.9411);">Opacity:</span>
<div style="left:1921.8px;top:774.5px;width:60.6px;height:19.6px;background:#444444;border:1px solid #5c5c5c;border-radius:3px;"></div>
<div style="left:1964.2px;top:776px;width:1px;height:16.6px;background:#5c5c5c;"></div>
<span style="left:1927.80px;top:779.00px;font-size:12px;color:#f0f0f0;transform:scaleX(0.9735);">100%</span>
<svg style="left:1969.0px;top:783.15px;" width="9.4" height="5.7" viewBox="0 0 9.4 5.7"><path d="M1 1 L4.7 4.7 L8.4 1" fill="none" stroke="#c4c4c4" stroke-width="1.0"/></svg>
<div style="left:1706px;top:800px;width:341px;height:2px;background:#484848;"></div>
<span style="left:1712.01px;top:811.00px;font-size:13px;color:#d4d4d4;transform:scaleX(0.9946);">Lock:</span>
<span style="left:1899.51px;top:811.00px;font-size:13px;color:#d4d4d4;transform:scaleX(0.8922);">Fill:</span>
<div style="left:1921.8px;top:808.1px;width:60.6px;height:19.6px;background:#444444;border:1px solid #5c5c5c;border-radius:3px;"></div>
<div style="left:1964.2px;top:809.6px;width:1px;height:16.6px;background:#5c5c5c;"></div>
<span style="left:1927.80px;top:812.00px;font-size:12px;color:#f0f0f0;transform:scaleX(0.9735);">100%</span>
<svg style="left:1969.0px;top:816.65px;" width="9.4" height="5.7" viewBox="0 0 9.4 5.7"><path d="M1 1 L4.7 4.7 L8.4 1" fill="none" stroke="#c4c4c4" stroke-width="1.0"/></svg>
<div style="left:1706px;top:837px;width:321.3px;height:247px;background:#4d4d4d;"></div>
<div style="left:2027.3px;top:902.8px;width:19.2px;height:181px;background:#4d4d4d;"></div>
<div style="left:1706px;top:837px;width:321.3px;height:32.3px;background:#424242;"></div>
<div style="left:1706px;top:869.6px;width:321.3px;height:32.6px;background:#535353;"></div>
<div style="left:1742.3px;top:869.6px;width:285px;height:32.6px;background:#6b6b6b;"></div>
<div style="left:1706px;top:869px;width:321.3px;height:0.9px;background:#3c3c3c;"></div>
<div style="left:1706px;top:902px;width:321.3px;height:0.9px;background:#444;"></div>
<span style="left:1769.40px;top:846.00px;font-size:13px;color:#f0f0f0;font-weight:bold;transform:scaleX(0.9679);">Artboard 1</span>
<span style="left:1814.47px;top:879.00px;font-size:13px;color:#ececec;transform:scaleX(0.9328);">Layer 1</span>
<svg style="left:1745.8px;top:848.95px;" width="11" height="6.5" viewBox="0 0 11 6.5"><path d="M1 1 L5.5 5.5 L10 1" fill="none" stroke="#b4b4b4" stroke-width="1.1"/></svg>
<div style="left:1766px;top:874px;width:38.4px;height:23.6px;background:#3a3a3a;"></div>
<div style="left:1767px;top:876px;width:36.4px;height:20.2px;background-color:#fff;background-image:linear-gradient(45deg,#ccc 25%,transparent 25%,transparent 75%,#ccc 75%),linear-gradient(45deg,#ccc 25%,transparent 25%,transparent 75%,#ccc 75%);background-size:7px 7px;background-position:0 0,3.5px 3.5px;"></div>
<svg style="left:1763px;top:872px;" width="44.4" height="27.6" viewBox="0 0 44.4 27.6"><path d="M0.6 6 V0.6 H14 M30.4 0.6 H43.8 V6 M43.8 21.6 V27 H30.4 M14 27 H0.6 V21.6" fill="none" stroke="#f0f0f0" stroke-width="1.2"/></svg>
<div style="left:1706px;top:1083.6px;width:341px;height:1.6px;background:#444;"></div>
<div style="left:1706px;top:1085.2px;width:341px;height:28.8px;background:#535353;"></div>
<div style="left:12.0px;top:89.3px;width:1.1px;height:4.6px;background:#444;"></div>
<div style="left:14.45px;top:89.3px;width:1.1px;height:4.6px;background:#444;"></div>
<div style="left:16.9px;top:89.3px;width:1.1px;height:4.6px;background:#444;"></div>
<div style="left:19.35px;top:89.3px;width:1.1px;height:4.6px;background:#444;"></div>
<div style="left:21.8px;top:89.3px;width:1.1px;height:4.6px;background:#444;"></div>
<div style="left:24.25px;top:89.3px;width:1.1px;height:4.6px;background:#444;"></div>
<div style="left:26.700000000000003px;top:89.3px;width:1.1px;height:4.6px;background:#444;"></div>
<div style="left:29.150000000000002px;top:89.3px;width:1.1px;height:4.6px;background:#444;"></div>
<div style="left:31.6px;top:89.3px;width:1.1px;height:4.6px;background:#444;"></div>
<div style="left:34.05px;top:89.3px;width:1.1px;height:4.6px;background:#444;"></div>
<svg style="left:14px;top:111px;" width="20" height="20" viewBox="0 0 20 20"><g fill="#dedede" stroke="none"><path d="M9.6 0.6 L12.9 4.6 H10.4 V9 H14.6 V6.5 L18.6 9.8 L14.6 13.1 V10.6 H10.4 V15 H12.9 L9.6 19 L6.3 15 H8.8 V10.6 H4.6 V13.1 L0.6 9.8 L4.6 6.5 V9 H8.8 V4.6 H6.3z"/></g></svg>
<svg style="left:34.8px;top:127.8px;" width="4.4" height="4.4" viewBox="0 0 4.4 4.4"><path d="M4.2 0.2 V4.2 H0.2z" fill="#cfcfcf"/></svg>
<svg style="left:13.6px;top:143.4px;" width="21" height="17" viewBox="0 0 21 17"><rect x="1.2" y="1.2" width="18.2" height="14.2" fill="none" stroke="#dedede" stroke-width="1.6" stroke-dasharray="4.4 2.5" stroke-dashoffset="2.2"/></svg>
<svg style="left:34.8px;top:159px;" width="4.4" height="4.4" viewBox="0 0 4.4 4.4"><path d="M4.2 0.2 V4.2 H0.2z" fill="#cfcfcf"/></svg>
<svg style="left:13.6px;top:173px;" width="22" height="22" viewBox="0 0 22 22"><ellipse cx="10.6" cy="8.6" rx="9.6" ry="7.4" fill="none" stroke="#dedede" stroke-width="1.5" transform="rotate(-14 10.6 8.6)"/><circle cx="4.4" cy="14.4" r="2.1" fill="none" stroke="#dedede" stroke-width="1.3"/><path d="M5.6 16 C7.4 17.4 7.2 19.4 5.2 21" fill="none" stroke="#dedede" stroke-width="1.3"/></svg>
<svg style="left:34.8px;top:190.6px;" width="4.4" height="4.4" viewBox="0 0 4.4 4.4"><path d="M4.2 0.2 V4.2 H0.2z" fill="#cfcfcf"/></svg>
<svg style="left:15px;top:203.6px;" width="20" height="23" viewBox="0 0 20 23"><rect x="1.4" y="1.2" width="15" height="15" fill="none" stroke="#dedede" stroke-width="1.4" stroke-dasharray="1.4 1.3"/><rect x="4" y="4.4" width="9" height="8.6" fill="#dedede"/><path d="M10 9.8 L10 21.4 L13 18.6 L18.8 18.2z" fill="#dedede" stroke="#535353" stroke-width="1"/></svg>
<svg style="left:34.8px;top:221.8px;" width="4.4" height="4.4" viewBox="0 0 4.4 4.4"><path d="M4.2 0.2 V4.2 H0.2z" fill="#cfcfcf"/></svg>
<svg style="left:12px;top:235px;" width="23" height="21" viewBox="0 0 23 21"><path d="M0.4 4.6 H3.6 M5.8 0.6 V15 H20.2 M5.8 4.6 H16.6 V20 M16.6 15 H22" fill="none" stroke="#dedede" stroke-width="1.7"/></svg>
<svg style="left:34.8px;top:252.6px;" width="4.4" height="4.4" viewBox="0 0 4.4 4.4"><path d="M4.2 0.2 V4.2 H0.2z" fill="#cfcfcf"/></svg>
<svg style="left:13.4px;top:267.4px;" width="22" height="18" viewBox="0 0 22 18"><rect x="1.6" y="1.6" width="18.4" height="14.6" fill="#7c7c7c" stroke="#dedede" stroke-width="1.5"/><path d="M1.6 1.6 L20 16.2 M20 1.6 L1.6 16.2" stroke="#dedede" stroke-width="1.3"/><g fill="#dedede"><circle cx="1.6" cy="1.6" r="1.5"/><circle cx="20" cy="1.6" r="1.5"/><circle cx="1.6" cy="16.2" r="1.5"/><circle cx="20" cy="16.2" r="1.5"/></g></svg>
<svg style="left:14px;top:297.4px;" width="20" height="20" viewBox="0 0 20 20"><path d="M10.4 7.2 L3 14.6 Q1.6 16 1.6 17.2 Q1.8 18.4 3 18.4 Q4.2 18.4 5.4 17 L12.8 9.6" fill="none" stroke="#dedede" stroke-width="1.5"/><path d="M9.2 5 L10.8 3.6 L12 4.8 L14 2 Q15.6 0.2 17.6 1.8 Q19.2 3.6 17.6 5.4 L15 8 L16.4 9.4 L15 10.8z" fill="#dedede"/></svg>
<svg style="left:34.8px;top:315px;" width="4.4" height="4.4" viewBox="0 0 4.4 4.4"><path d="M4.2 0.2 V4.2 H0.2z" fill="#cfcfcf"/></svg>
<svg style="left:13px;top:329.6px;" width="21" height="19" viewBox="0 0 21 19"><rect x="3.4" y="3.2" width="14" height="12.6" rx="2.4" fill="#7a7a7a" stroke="#dedede" stroke-width="1.6"/><path d="M7 0.4 V3 M10.4 0.4 V3 M13.8 0.4 V3 M7 16 V18.6 M10.4 16 V18.6 M13.8 16 V18.6 M0.4 6.4 H3 M0.4 9.5 H3 M0.4 12.6 H3 M17.8 6.4 H20.4 M17.8 9.5 H20.4 M17.8 12.6 H20.4" stroke="#dedede" stroke-width="1.3"/></svg>
<svg style="left:34.8px;top:346.2px;" width="4.4" height="4.4" viewBox="0 0 4.4 4.4"><path d="M4.2 0.2 V4.2 H0.2z" fill="#cfcfcf"/></svg>
<div style="left:5.8px;top:355.8px;width:36.2px;height:28.8px;background:#323232;border-radius:3.5px;border:1px solid #484848;"></div>
<svg style="left:14.8px;top:360.6px;" width="20" height="19" viewBox="0 0 20 19"><path d="M17.2 0.6 Q19.9 -0.2 19.4 2.4 L12.6 12.8 L8.8 9.8z M8 10.6 L11.6 13.6 Q11.8 17.6 6.6 18.3 Q3.4 18.8 0.4 18 Q3.2 16.6 3.6 14.2 Q4.4 10.8 8 10.6z" fill="#dedede"/></svg>
<svg style="left:34.8px;top:377.6px;" width="4.4" height="4.4" viewBox="0 0 4.4 4.4"><path d="M4.2 0.2 V4.2 H0.2z" fill="#cfcfcf"/></svg>
<svg style="left:15.4px;top:391.6px;" width="17" height="20" viewBox="0 0 17 20"><circle cx="8.4" cy="4.4" r="4" fill="#dedede"/><path d="M6.8 7.6 H10 L10.6 11.6 H14.6 Q16.2 11.6 16.2 13 V16 H0.6 V13 Q0.6 11.6 2.2 11.6 H6.2z" fill="#dedede"/><rect x="0.6" y="17.4" width="15.6" height="1.6" fill="#dedede"/></svg>
<svg style="left:34.8px;top:408.6px;" width="4.4" height="4.4" viewBox="0 0 4.4 4.4"><path d="M4.2 0.2 V4.2 H0.2z" fill="#cfcfcf"/></svg>
<svg style="left:12px;top:423.6px;" width="22" height="20" viewBox="0 0 22 20"><g transform="translate(3.6 0.8) scale(0.93)"><path d="M17.2 0.6 Q19.9 -0.2 19.4 2.4 L12.6 12.8 L8.8 9.8z M8 10.6 L11.6 13.6 Q11.8 17.6 6.6 18.3 Q3.4 18.8 0.4 18 Q3.2 16.6 3.6 14.2 Q4.4 10.8 8 10.6z" fill="#dedede"/></g><path d="M2 6.4 Q6.6 1.6 11.4 4" fill="none" stroke="#dedede" stroke-width="1.4"/><path d="M0 7.6 L4.6 3.6 L5.4 8z" fill="#dedede"/><g fill="#dedede"><circle cx="14" cy="16.4" r="0.8"/><circle cx="16.6" cy="14.6" r="0.8"/><circle cx="18.2" cy="12" r="0.8"/><circle cx="18.8" cy="9" r="0.8"/></g></svg>
<svg style="left:34.8px;top:440px;" width="4.4" height="4.4" viewBox="0 0 4.4 4.4"><path d="M4.2 0.2 V4.2 H0.2z" fill="#cfcfcf"/></svg>
<svg style="left:14px;top:455px;" width="20" height="18" viewBox="0 0 20 18"><path d="M11.4 0.6 L18.6 6.4 L9.6 15.6 H4.6 L0.8 12.2z" fill="none" stroke="#dedede" stroke-width="1.4"/><path d="M11.4 0.6 L18.6 6.4 L12.8 12.4 L5.6 6.6z" fill="#dedede"/><path d="M4.6 16.2 H18.6" stroke="#dedede" stroke-width="1.4"/></svg>
<svg style="left:34.8px;top:471.2px;" width="4.4" height="4.4" viewBox="0 0 4.4 4.4"><path d="M4.2 0.2 V4.2 H0.2z" fill="#cfcfcf"/></svg>
<div style="left:14.3px;top:486.6px;width:19.4px;height:15.4px;border:1.4px solid #e4e4e4;background:linear-gradient(to right,#222,#d8d8d8);"></div>
<svg style="left:34.8px;top:502.6px;" width="4.4" height="4.4" viewBox="0 0 4.4 4.4"><path d="M4.2 0.2 V4.2 H0.2z" fill="#cfcfcf"/></svg>
<svg style="left:16px;top:516.4px;" width="17" height="20" viewBox="0 0 17 20"><path d="M2.6 4.4 Q3.4 1 7.6 0.8 H12.4 Q15.4 1 15.4 4.4 Q15.6 10 11.6 12.4 Q9.6 13.4 9 11.6 L10.4 8.6 L4.4 17 Q3 18.8 1.4 18 Q0 17 1 15.2 L5.6 8 Q3.4 9.4 2.6 8 Q2 6.4 2.6 4.4z" fill="#dedede"/></svg>
<svg style="left:34.8px;top:533.6px;" width="4.4" height="4.4" viewBox="0 0 4.4 4.4"><path d="M4.2 0.2 V4.2 H0.2z" fill="#cfcfcf"/></svg>
<svg style="left:14.3px;top:549.6px;" width="20" height="17.2" viewBox="0 0 20 17.2"><ellipse cx="10" cy="8.6" rx="9.9" ry="8.5" fill="#dcdcdc"/><circle cx="6.8" cy="3.2" r="0.71" fill="#5a5a5a"/><circle cx="2.1" cy="9.2" r="0.60" fill="#5a5a5a"/><circle cx="8.6" cy="13.7" r="0.50" fill="#5a5a5a"/><circle cx="4.9" cy="10.6" r="0.83" fill="#5a5a5a"/><circle cx="11.4" cy="7.0" r="0.84" fill="#5a5a5a"/><circle cx="3.0" cy="5.6" r="0.78" fill="#5a5a5a"/><circle cx="10.9" cy="1.8" r="0.47" fill="#5a5a5a"/><circle cx="8.7" cy="5.7" r="0.68" fill="#5a5a5a"/><circle cx="15.4" cy="11.7" r="0.55" fill="#5a5a5a"/><circle cx="11.4" cy="9.0" r="0.80" fill="#5a5a5a"/><circle cx="14.2" cy="5.3" r="0.84" fill="#5a5a5a"/><circle cx="14.7" cy="3.2" r="0.65" fill="#5a5a5a"/><circle cx="14.9" cy="9.7" r="0.80" fill="#5a5a5a"/><circle cx="6.6" cy="11.6" r="0.69" fill="#5a5a5a"/><circle cx="9.5" cy="11.2" r="0.47" fill="#5a5a5a"/><circle cx="6.0" cy="6.8" r="0.72" fill="#5a5a5a"/><circle cx="10.9" cy="14.6" r="0.78" fill="#5a5a5a"/><circle cx="16.7" cy="5.1" r="0.62" fill="#5a5a5a"/><circle cx="5.1" cy="8.4" r="0.69" fill="#5a5a5a"/><circle cx="12.2" cy="11.3" r="0.47" fill="#5a5a5a"/><circle cx="17.4" cy="13.0" r="0.80" fill="#5a5a5a"/><circle cx="15.5" cy="6.9" r="0.61" fill="#5a5a5a"/><circle cx="4.6" cy="3.3" r="0.59" fill="#5a5a5a"/><circle cx="16.9" cy="10.4" r="0.51" fill="#5a5a5a"/><circle cx="9.4" cy="8.3" r="0.48" fill="#5a5a5a"/><circle cx="5.7" cy="13.7" r="0.51" fill="#5a5a5a"/><circle cx="3.9" cy="12.8" r="0.66" fill="#5a5a5a"/><circle cx="15.6" cy="13.6" r="0.75" fill="#5a5a5a"/><circle cx="18.4" cy="7.8" r="0.82" fill="#5a5a5a"/><circle cx="13.0" cy="15.0" r="0.76" fill="#5a5a5a"/><circle cx="8.2" cy="15.6" r="0.74" fill="#5a5a5a"/><circle cx="11.6" cy="4.8" r="0.62" fill="#5a5a5a"/><circle cx="8.9" cy="3.7" r="0.45" fill="#5a5a5a"/><circle cx="13.5" cy="7.9" r="0.66" fill="#5a5a5a"/><circle cx="2.1" cy="11.2" r="0.76" fill="#5a5a5a"/><circle cx="8.9" cy="1.1" r="0.58" fill="#5a5a5a"/><circle cx="12.5" cy="13.3" r="0.48" fill="#5a5a5a"/><circle cx="7.0" cy="9.4" r="0.82" fill="#5a5a5a"/><circle cx="12.9" cy="1.8" r="0.74" fill="#5a5a5a"/><circle cx="1.4" cy="7.2" r="0.77" fill="#5a5a5a"/><circle cx="7.0" cy="5.0" r="0.83" fill="#5a5a5a"/><circle cx="14.7" cy="15.1" r="0.70" fill="#5a5a5a"/><circle cx="18.7" cy="9.9" r="0.82" fill="#5a5a5a"/><circle cx="16.6" cy="8.4" r="0.47" fill="#5a5a5a"/><circle cx="3.4" cy="7.8" r="0.49" fill="#5a5a5a"/><circle cx="10.1" cy="16.2" r="0.53" fill="#5a5a5a"/><circle cx="13.1" cy="9.8" r="0.61" fill="#5a5a5a"/><circle cx="4.7" cy="5.3" r="0.81" fill="#5a5a5a"/><circle cx="13.0" cy="3.6" r="0.51" fill="#5a5a5a"/><circle cx="10.5" cy="12.9" r="0.74" fill="#5a5a5a"/><circle cx="18.3" cy="5.9" r="0.69" fill="#5a5a5a"/><circle cx="6.5" cy="15.3" r="0.46" fill="#5a5a5a"/></svg>
<svg style="left:34.8px;top:565px;" width="4.4" height="4.4" viewBox="0 0 4.4 4.4"><path d="M4.2 0.2 V4.2 H0.2z" fill="#cfcfcf"/></svg>
<svg style="left:15px;top:579.6px;" width="19" height="19" viewBox="0 0 19 19"><path d="M11.2 2.6 L15.8 7.2 L12.6 14.2 L2 17.6 L5 6.4z" fill="none" stroke="#dedede" stroke-width="1.4" stroke-linejoin="round"/><path d="M2 17.6 L7.6 11.6" stroke="#dedede" stroke-width="1.2"/><circle cx="8.2" cy="11" r="1.5" fill="#dedede"/><path d="M12.6 0.4 L17.8 5.6 L16.2 7.2 L11 2z" fill="#dedede"/></svg>
<svg style="left:34.8px;top:596.2px;" width="4.4" height="4.4" viewBox="0 0 4.4 4.4"><path d="M4.2 0.2 V4.2 H0.2z" fill="#cfcfcf"/></svg>
<span style="left:15.80px;top:609.00px;font-size:23px;color:#dedede;font-weight:bold;transform:scaleX(1.0933);font-family:'Liberation Serif',serif;">T</span>
<svg style="left:34.8px;top:627.6px;" width="4.4" height="4.4" viewBox="0 0 4.4 4.4"><path d="M4.2 0.2 V4.2 H0.2z" fill="#cfcfcf"/></svg>
<svg style="left:17.4px;top:640.4px;" width="14" height="21" viewBox="0 0 14 21"><path d="M1 0.8 V16.2 L5 12.6 L8 19.8 L10.4 18.8 L7.4 11.8 L12.6 11.6z" fill="#111" stroke="#dedede" stroke-width="1.3" stroke-linejoin="round"/></svg>
<svg style="left:34.8px;top:658.6px;" width="4.4" height="4.4" viewBox="0 0 4.4 4.4"><path d="M4.2 0.2 V4.2 H0.2z" fill="#cfcfcf"/></svg>
<div style="left:14.3px;top:674.2px;width:19.2px;height:15.4px;border:1.4px solid #e2e2e2;background:#6e6e6e;"></div>
<svg style="left:34.8px;top:690.6px;" width="4.4" height="4.4" viewBox="0 0 4.4 4.4"><path d="M4.2 0.2 V4.2 H0.2z" fill="#cfcfcf"/></svg>
<svg style="left:14.6px;top:703.6px;" width="18" height="20" viewBox="0 0 18 20"><path d="M6 9.6 V2.6 Q6 1.4 7 1.4 Q8 1.4 8 2.6 V1.6 Q8 0.4 9.1 0.4 Q10.2 0.4 10.2 1.6 V2.4 Q10.2 1.2 11.3 1.2 Q12.4 1.2 12.4 2.4 V4.4 Q12.4 3.4 13.4 3.4 Q14.4 3.4 14.4 4.6 V12 Q14.4 16 12.2 18 Q10.6 19.2 8.4 19 Q6 18.8 4.6 16.6 L0.8 10.8 Q0.2 9.6 1.2 9 Q2.2 8.6 3 9.6 L4.4 11.2 V9.6z" fill="#dedede"/><path d="M8.1 3 V9 M10.3 3 V9 M12.4 4.6 V9.6" stroke="#535353" stroke-width="0.6"/></svg>
<svg style="left:34.8px;top:721.6px;" width="4.4" height="4.4" viewBox="0 0 4.4 4.4"><path d="M4.2 0.2 V4.2 H0.2z" fill="#cfcfcf"/></svg>
<svg style="left:13px;top:733.6px;" width="22" height="22" viewBox="0 0 22 22"><circle cx="7.8" cy="8" r="6.4" fill="none" stroke="#dedede" stroke-width="1.5"/><path d="M12.4 12.8 L19.6 19.6" stroke="#dedede" stroke-width="2.2" stroke-linecap="round"/><path d="M5 5.4 Q7.4 3.4 10 4.6" fill="none" stroke="#dedede" stroke-width="0.9"/></svg>
<div style="left:14.299999999999999px;top:774.1999999999999px;width:4.2px;height:4.2px;border-radius:50%;background:#dedede;"></div>
<div style="left:21.7px;top:774.1999999999999px;width:4.2px;height:4.2px;border-radius:50%;background:#dedede;"></div>
<div style="left:29.099999999999998px;top:774.1999999999999px;width:4.2px;height:4.2px;border-radius:50%;background:#dedede;"></div>
<svg style="left:34.8px;top:784px;" width="4.4" height="4.4" viewBox="0 0 4.4 4.4"><path d="M4.2 0.2 V4.2 H0.2z" fill="#cfcfcf"/></svg>
<svg style="left:5px;top:797px;" width="16" height="16" viewBox="0 0 16 16"><rect x="5.1" y="6" width="8.9" height="8.8" fill="#dcdcdc"/><rect x="1.1" y="2" width="9.2" height="9.2" fill="#dadada"/><rect x="3.1" y="4.2" width="5.6" height="5.5" fill="#141414"/></svg>
<svg style="left:26px;top:797px;" width="15" height="15" viewBox="0 0 15 15"><path d="M4.6 4.8 H10.4 V11" fill="none" stroke="#dedede" stroke-width="1.7"/><path d="M0.8 4.8 L4.8 1.4 V8.2z M10.4 14 L7 10.2 H13.8z" fill="#dedede"/></svg>
<svg style="left:5px;top:815px;" width="38" height="39" viewBox="0 0 38 39"><rect x="13.3" y="13.9" width="23.2" height="23.8" rx="0.8" fill="#383838"/><rect x="14" y="15" width="22" height="22.1" rx="0.8" fill="#fff"/><rect x="1.1" y="2" width="23.5" height="23.8" rx="0.8" fill="#3a3a3a"/><rect x="2" y="3.1" width="22" height="22.1" rx="0.8" fill="#fff"/><rect x="4" y="5.1" width="18" height="18" rx="0.4" fill="#000"/></svg>
<svg style="left:13.4px;top:866px;" width="21" height="16.2" viewBox="0 0 21 16.2"><rect x="0.7" y="0.7" width="19.4" height="14.6" fill="#636363" stroke="#c8c8c8" stroke-width="1.2"/><circle cx="10.4" cy="8" r="4.4" fill="none" stroke="#d8d8d8" stroke-width="1.1" stroke-dasharray="1.6 1.3"/></svg>
<svg style="left:13.4px;top:897px;" width="21" height="16.4" viewBox="0 0 21 16.4"><rect x="0.7" y="4.4" width="13.4" height="11" fill="none" stroke="#d4d4d4" stroke-width="1.3"/><rect x="6" y="0.7" width="14" height="10.6" fill="#535353" stroke="#d4d4d4" stroke-width="1.3"/></svg>
<svg style="left:34.8px;top:911.6px;" width="4.4" height="4.4" viewBox="0 0 4.4 4.4"><path d="M4.2 0.2 V4.2 H0.2z" fill="#cfcfcf"/></svg>
<div style="left:574.8px;top:43.3px;width:16.8px;height:16.8px;border-radius:50%;background-color:#5e5e5e;background-image:linear-gradient(45deg,#7a7a7a 25%,transparent 25%,transparent 75%,#7a7a7a 75%),linear-gradient(45deg,#7a7a7a 25%,transparent 25%,transparent 75%,#7a7a7a 75%);background-size:2px 2px;background-position:0 0,1px 1px;border:1.3px solid #d0d0d0;"></div>
<svg style="left:581px;top:39.5px;" width="16" height="15" viewBox="0 0 16 15"><path d="M1.4 13.4 L3 9.8 L11.4 2 L13.8 4.6 L5.2 12.2z" fill="#d4d4d4" stroke="#535353" stroke-width="0.8"/><path d="M12.2 1.2 L13 0.6 L15.2 3 L14.4 3.8z" fill="#d4d4d4"/></svg>
<svg style="left:725.6px;top:41.6px;" width="24" height="17" viewBox="0 0 24 17"><path d="M9.2 0.8 Q1.4 2.6 1.2 8.4 Q1.4 14.2 8.8 15.8 Q5.4 12.4 5.6 8.2 Q5.8 3.8 9.2 0.8z" fill="#909090"/><path d="M18.4 1.6 L20.6 0.8 L22.4 2.8 L21.6 4.6 L19 8.6 L21.4 12 L19 13.6 L16.4 10.4 L10 15.2 Q8.6 15.8 8 14.6 L8.4 13.2 L16 6.4z" fill="#535353" stroke="#d4d4d4" stroke-width="1.3" stroke-linejoin="round"/><path d="M17.2 3.4 L20 1.2 L22 3.4 L19.4 6z" fill="#d4d4d4"/></svg>
<svg style="left:912px;top:40px;" width="21" height="23" viewBox="0 0 21 23"><path d="M17.78 8.19 L17.78 11.01 L15.53 11.00 L14.82 12.73 L16.41 14.32 L14.42 16.31 L12.83 14.72 L11.10 15.43 L11.11 17.68 L8.29 17.68 L8.30 15.43 L6.57 14.72 L4.98 16.31 L2.99 14.32 L4.58 12.73 L3.87 11.00 L1.62 11.01 L1.62 8.19 L3.87 8.20 L4.58 6.47 L2.99 4.88 L4.98 2.89 L6.57 4.48 L8.30 3.77 L8.29 1.52 L11.11 1.52 L11.10 3.77 L12.83 4.48 L14.42 2.89 L16.41 4.88 L14.82 6.47 L15.53 8.20z" fill="#d4d4d4"/><circle cx="9.7" cy="9.6" r="3.1" fill="#535353"/><path d="M15.8 18.9 H19.8 L17.8 21.3z" fill="#e8e8e8"/></svg>
<svg style="left:948px;top:42.6px;" width="18" height="13.4" viewBox="0 0 18 13.4"><path d="M13.6 1.2 L1.4 11.8 H16.8" fill="none" stroke="#d4d4d4" stroke-width="1.4"/><path d="M10.4 4.4 Q13.6 7.2 13.8 11.6" fill="none" stroke="#d4d4d4" stroke-width="1.2"/></svg>
<svg style="left:1033px;top:39px;" width="23" height="22" viewBox="0 0 23 22"><path d="M17.2 7.4 A8.6 8.6 0 1 1 10 2.9" fill="none" stroke="#d4d4d4" stroke-width="1.3"/><path d="M14.2 9.4 A4.8 4.8 0 1 1 10 6.8" fill="none" stroke="#d4d4d4" stroke-width="1.3"/><path d="M9 12.8 L10.4 9.6 L17.8 2.4 L20 4.8 L12.4 11.8z" fill="#d4d4d4" stroke="#535353" stroke-width="0.7"/><path d="M18.6 1.6 L19.4 0.9 L21.6 3.2 L20.8 4z" fill="#d4d4d4"/></svg>
<svg style="left:1072px;top:40.4px;overflow:visible;" width="22" height="25" viewBox="0 0 22 25"><path d="M9.2 8.4 Q8.6 3.6 4.4 1.6 Q1.4 0.6 0.8 3 Q0.6 6 3.2 8.8 Q1 10.4 1.8 12.8 Q3 14.4 4.6 14.2 Q3.4 16.6 5.4 18 Q7.8 18.6 9.2 15.4" fill="none" stroke="#d4d4d4" stroke-width="1.3" stroke-linejoin="round"/><g transform="translate(20.8 0) scale(-1 1)"><path d="M9.2 8.4 Q8.6 3.6 4.4 1.6 Q1.4 0.6 0.8 3 Q0.6 6 3.2 8.8 Q1 10.4 1.8 12.8 Q3 14.4 4.6 14.2 Q3.4 16.6 5.4 18 Q7.8 18.6 9.2 15.4" fill="none" stroke="#d4d4d4" stroke-width="1.3" stroke-linejoin="round"/></g><path d="M10.4 -1 V23" stroke="#e6e6e6" stroke-width="1" stroke-dasharray="1.2 1.1"/><path d="M16.4 21.4 H20.4 L18.4 23.8z" fill="#e8e8e8"/></svg>
<div style="left:1668.8px;top:89.6px;width:1.1px;height:3.6px;background:#444;"></div>
<div style="left:1668.8px;top:138.6px;width:1.1px;height:3.6px;background:#444;"></div>
<div style="left:1671.25px;top:89.6px;width:1.1px;height:3.6px;background:#444;"></div>
<div style="left:1671.25px;top:138.6px;width:1.1px;height:3.6px;background:#444;"></div>
<div style="left:1673.7px;top:89.6px;width:1.1px;height:3.6px;background:#444;"></div>
<div style="left:1673.7px;top:138.6px;width:1.1px;height:3.6px;background:#444;"></div>
<div style="left:1676.1499999999999px;top:89.6px;width:1.1px;height:3.6px;background:#444;"></div>
<div style="left:1676.1499999999999px;top:138.6px;width:1.1px;height:3.6px;background:#444;"></div>
<div style="left:1678.6px;top:89.6px;width:1.1px;height:3.6px;background:#444;"></div>
<div style="left:1678.6px;top:138.6px;width:1.1px;height:3.6px;background:#444;"></div>
<div style="left:1681.05px;top:89.6px;width:1.1px;height:3.6px;background:#444;"></div>
<div style="left:1681.05px;top:138.6px;width:1.1px;height:3.6px;background:#444;"></div>
<div style="left:1683.5px;top:89.6px;width:1.1px;height:3.6px;background:#444;"></div>
<div style="left:1683.5px;top:138.6px;width:1.1px;height:3.6px;background:#444;"></div>
<div style="left:1685.95px;top:89.6px;width:1.1px;height:3.6px;background:#444;"></div>
<div style="left:1685.95px;top:138.6px;width:1.1px;height:3.6px;background:#444;"></div>
<div style="left:1688.3999999999999px;top:89.6px;width:1.1px;height:3.6px;background:#444;"></div>
<div style="left:1688.3999999999999px;top:138.6px;width:1.1px;height:3.6px;background:#444;"></div>
<div style="left:1690.85px;top:89.6px;width:1.1px;height:3.6px;background:#444;"></div>
<div style="left:1690.85px;top:138.6px;width:1.1px;height:3.6px;background:#444;"></div>
<svg style="left:1670px;top:101.6px;" width="20" height="22" viewBox="0 0 20 22"><rect x="1.6" y="1" width="5" height="4.6" fill="none" stroke="#d2d2d2" stroke-width="1.2"/><rect x="1.6" y="8.2" width="5" height="4.6" fill="none" stroke="#d2d2d2" stroke-width="1.2"/><rect x="1" y="15.2" width="6.2" height="5.8" fill="#d2d2d2"/><path d="M11.2 19.4 Q22 13 17.8 4.4 L14.4 5.6 Q17 12.6 11.2 19.4z" fill="#d2d2d2"/><path d="M10 5 L18.6 1.6 L17 9.8z" fill="#d2d2d2"/></svg>
<svg style="left:1667px;top:150px;" width="27" height="23" viewBox="0 0 27 23"><path d="M1 1.6 H3 M1 5 H3 M1 8.6 H3" stroke="#d2d2d2" stroke-width="1.6"/><path d="M4.4 1.6 H9.6 M4.4 5 H9.6 M4.4 8.6 H9.6" stroke="#d2d2d2" stroke-width="1.1"/><path d="M24 2.6 Q26.6 2 26 4.6 L17.6 14.8 L14 11.8z M13.6 12.6 L16.2 14.8 Q16.6 19.4 11.6 20.4 Q8 21 5.6 20.6 Q8.4 19 8.8 16.4 Q9.6 12.8 13.6 12.6z" fill="#d2d2d2"/></svg>
<svg style="left:1666px;top:186px;" width="27" height="21" viewBox="0 0 27 21"><path d="M0.4 2.2 Q5 -0.4 9.6 1 Q12 2.2 12 3.8 Q12 5.6 9.6 6.4 Q6.4 7 4.4 5.6 Q2.6 3.4 0.4 2.2z" fill="#d2d2d2"/><rect x="13.4" y="2.8" width="11.6" height="1.8" fill="#d2d2d2"/><rect x="3.2" y="12.8" width="13" height="2.6" rx="1.2" fill="#d2d2d2"/><path d="M16.4 13.2 Q20 8.4 23.4 7.2 Q25.8 11.8 24.4 19.6 Q19.6 18.4 16.4 15z" fill="#d2d2d2"/></svg>
<svg style="left:1726px;top:401.6px;" width="11" height="18.4" viewBox="0 0 11 18.4"><rect x="1.6" y="0.8" width="7.4" height="9" rx="3.6" fill="none" stroke="#8a8a8a" stroke-width="1.4"/><rect x="1.6" y="8.6" width="7.4" height="9" rx="3.6" fill="none" stroke="#8a8a8a" stroke-width="1.4"/><path d="M5.3 5.4 V13" stroke="#8a8a8a" stroke-width="1.4"/></svg>
<svg style="left:1753px;top:454.4px;" width="18" height="12.6" viewBox="0 0 18 12.6"><path d="M13.2 1 L1.6 11 H16.6" fill="none" stroke="#d4d4d4" stroke-width="1.4"/><path d="M10.4 3.8 Q13.4 6.6 13.6 11" fill="none" stroke="#d4d4d4" stroke-width="1.2"/></svg>
<svg style="left:1881px;top:452.6px;" width="20" height="15.4" viewBox="0 0 20 15.4"><path d="M1 2.2 L6.6 7.6 L1 13z" fill="none" stroke="#bdbdbd" stroke-width="1.1"/><path d="M19 2 L13 7.6 L19 13.2z" fill="#bdbdbd"/><path d="M9.8 0 V15.4" stroke="#bdbdbd" stroke-width="1" stroke-dasharray="1.2 1"/></svg>
<svg style="left:1916.6px;top:451px;" width="17" height="19" viewBox="0 0 17 19"><path d="M3.6 0.8 H13 L8.3 5.8z" fill="none" stroke="#bdbdbd" stroke-width="1.1"/><path d="M2.6 18 H14 L8.3 12z" fill="#bdbdbd"/><path d="M0 9 H16.6" stroke="#bdbdbd" stroke-width="1" stroke-dasharray="1.2 1"/></svg>
<svg style="left:1722.4px;top:557px;" width="17" height="18.4" viewBox="0 0 17 18.4"><rect x="0.5" y="0" width="1.3" height="18.4" fill="#d6d6d6"/><rect x="3.4" y="3.6" width="8" height="4.4" fill="#d6d6d6"/><rect x="3.4" y="10.4" width="12.2" height="4.4" fill="#d6d6d6"/></svg>
<svg style="left:1757.4px;top:557px;" width="15" height="18.4" viewBox="0 0 15 18.4"><rect x="6.7" y="0" width="1.3" height="18.4" fill="#d6d6d6"/><rect x="2.6" y="3.6" width="9.6" height="4.4" fill="#d6d6d6"/><rect x="0.6" y="10.4" width="13.6" height="4.4" fill="#d6d6d6"/></svg>
<svg style="left:1792.4px;top:557px;" width="17" height="18.4" viewBox="0 0 17 18.4"><rect x="14.8" y="0" width="1.3" height="18.4" fill="#d6d6d6"/><rect x="5.2" y="3.6" width="8" height="4.4" fill="#d6d6d6"/><rect x="0.8" y="10.4" width="12.4" height="4.4" fill="#d6d6d6"/></svg>
<svg style="left:1846.8px;top:557.6px;" width="17.4" height="17" viewBox="0 0 17.4 17"><rect x="0" y="0.5" width="17.4" height="1.3" fill="#d6d6d6"/><rect x="3" y="3.4" width="4.6" height="12.8" fill="#d6d6d6"/><rect x="10" y="3.4" width="4.6" height="8.4" fill="#d6d6d6"/></svg>
<svg style="left:1881.4px;top:557.6px;" width="17.4" height="17" viewBox="0 0 17.4 17"><rect x="0" y="7.6" width="17.4" height="1.3" fill="#d6d6d6"/><rect x="3" y="1.4" width="4.6" height="13.8" fill="#d6d6d6"/><rect x="10" y="3.6" width="4.6" height="9.4" fill="#d6d6d6"/></svg>
<svg style="left:1916.6px;top:557.6px;" width="17.4" height="17" viewBox="0 0 17.4 17"><rect x="0" y="15.4" width="17.4" height="1.3" fill="#d6d6d6"/><rect x="3" y="1" width="4.6" height="12.8" fill="#d6d6d6"/><rect x="10" y="5.4" width="4.6" height="8.4" fill="#d6d6d6"/></svg>
<svg style="left:1828px;top:743.6px;" width="16.4" height="13.6" viewBox="0 0 16.4 13.6"><rect x="0.8" y="0.8" width="14.6" height="11.8" fill="none" stroke="#dcdcdc" stroke-width="1.4"/><path d="M2.6 10.6 L6 6 L8.4 8.6 L10.4 7 L13.4 10.6z" fill="#dcdcdc"/></svg>
<svg style="left:1857.6px;top:743.4px;" width="14.4" height="14.4" viewBox="0 0 14.4 14.4"><circle cx="7.1" cy="7.1" r="6.2" fill="none" stroke="#dcdcdc" stroke-width="1.3"/><path d="M2.7 11.5 A6.2 6.2 0 0 0 11.5 2.7z" fill="#dcdcdc"/></svg>
<span style="left:1886.20px;top:742.00px;font-size:18.5px;color:#dcdcdc;font-weight:bold;transform:scaleX(0.9846);font-family:'Liberation Serif',serif;">T</span>
<svg style="left:1914.6px;top:743.2px;" width="15" height="15" viewBox="0 0 15 15"><rect x="2.4" y="2.4" width="10" height="10" fill="none" stroke="#dcdcdc" stroke-width="1.4"/><g fill="#dcdcdc"><rect x="0.4" y="0.4" width="3.4" height="3.4"/><rect x="11" y="0.4" width="3.4" height="3.4"/><rect x="0.4" y="11" width="3.4" height="3.4"/><rect x="11" y="11" width="3.4" height="3.4"/></g></svg>
<svg style="left:1945px;top:743px;" width="14.4" height="15" viewBox="0 0 14.4 15"><path d="M4.6 1 H9.8 L13.2 4.4 V11 H8.6" fill="none" stroke="#dcdcdc" stroke-width="1.4"/><path d="M9.4 1 V4.8 H13.2" fill="none" stroke="#dcdcdc" stroke-width="1.1"/><rect x="0.6" y="6.8" width="7.4" height="7.4" fill="#dcdcdc"/></svg>
<div style="left:1973.6px;top:741.6px;width:9.6px;height:20px;border-radius:4.8px;background:#464646;"></div>
<div style="left:1973.8px;top:740.2px;width:9.2px;height:9.2px;border-radius:50%;background:#e4e4e4;"></div>
<svg style="left:1752.4px;top:810.4px;" width="14" height="14" viewBox="0 0 14 14"><rect x="0.3" y="0.3" width="13.3" height="13.3" fill="#dcdcdc"/><g fill="#585858"><rect x="1.4" y="1.4" width="3.6" height="3.6"/><rect x="8.9" y="1.4" width="3.6" height="3.6"/><rect x="5.1" y="5.1" width="3.7" height="3.7"/><rect x="1.4" y="8.9" width="3.6" height="3.6"/><rect x="8.9" y="8.9" width="3.6" height="3.6"/></g></svg>
<svg style="left:1778.4px;top:809.6px;" width="17" height="17" viewBox="0 0 17 17"><path d="M15 0.4 Q16.2 0.2 15.6 1.6 L9.6 10 L7.2 8z M6.4 8.8 L8.8 10.8 Q9.2 14.6 5.2 15.4 Q2.6 15.8 0.4 15.4 Q2.6 14.2 2.8 12.2 Q3.2 9 6.4 8.8z" fill="#dcdcdc"/></svg>
<svg style="left:1803.6px;top:809.8px;" width="16.4" height="16.4" viewBox="0 0 16.4 16.4"><path d="M8.2 0.4 L10.8 3.6 H9 V7.4 H12.8 V5.6 L16 8.2 L12.8 10.8 V9 H9 V12.8 H10.8 L8.2 16 L5.6 12.8 H7.4 V9 H3.6 V10.8 L0.4 8.2 L3.6 5.6 V7.4 H7.4 V3.6 H5.6z" fill="#dcdcdc"/></svg>
<svg style="left:1829px;top:808.6px;" width="19" height="17.6" viewBox="0 0 19 17.6"><path d="M4.4 4.8 H11.6 L15.4 8 V13 H4.4z" fill="none" stroke="#dcdcdc" stroke-width="1.5" stroke-linejoin="round"/><path d="M11.2 4.8 V8.4 H15.4" fill="none" stroke="#dcdcdc" stroke-width="1.1"/><path d="M0.8 4.6 H3.4 M0.8 13.2 H3.4 M16.4 13.2 H18.6 M4.2 1.6 V3.8 M4.2 14 V16.4 M15.4 14 V16.4" stroke="#dcdcdc" stroke-width="1.1"/><path d="M14.6 1.6 V3 M16.6 3.6 H18" stroke="#dcdcdc" stroke-width="1"/></svg>
<svg style="left:1857.6px;top:809.6px;" width="14" height="16" viewBox="0 0 14 16"><path d="M3.8 7 V4.6 Q3.8 1.2 7 1.2 Q10.2 1.2 10.2 4.6 V7" fill="none" stroke="#dcdcdc" stroke-width="1.7"/><rect x="0.8" y="6.8" width="12.4" height="8.6" rx="1" fill="#dcdcdc"/><circle cx="7" cy="11" r="1.3" fill="#535353"/></svg>
<svg style="left:1716.6px;top:848.0px;" width="16" height="10.8" viewBox="0 0 16 10.8"><path d="M0.4 5.4 Q8 -3.2 15.6 5.4 Q8 14 0.4 5.4z" fill="#e8e8e8"/><circle cx="8" cy="5.4" r="3.5" fill="#454545"/><circle cx="8.9" cy="4.5" r="0.8" fill="#cfcfcf"/></svg>
<svg style="left:1716.6px;top:881.2px;" width="16" height="10.8" viewBox="0 0 16 10.8"><path d="M0.4 5.4 Q8 -3.2 15.6 5.4 Q8 14 0.4 5.4z" fill="#e8e8e8"/><circle cx="8" cy="5.4" r="3.5" fill="#454545"/><circle cx="8.9" cy="4.5" r="0.8" fill="#cfcfcf"/></svg>
<svg style="left:1801.6px;top:1093.4px;" width="18.4" height="11" viewBox="0 0 18.4 11"><path d="M7.6 1 H5.2 Q1 1 1 5.3 Q1 9.6 5.2 9.6 H7.6 M10.8 1 H13.2 Q17.4 1 17.4 5.3 Q17.4 9.6 13.2 9.6 H10.8 M5.2 5.3 H13.2" fill="none" stroke="#8c8c8c" stroke-width="1.5"/></svg>
<span style="left:1837.60px;top:1090.00px;font-size:17px;color:#cfcfcf;transform:scaleX(0.9182);font-style:italic;">fx</span>
<svg style="left:1850.6px;top:1104.4px;" width="5" height="3.4" viewBox="0 0 5 3.4"><path d="M0.2 0.2 H4.6 L2.4 3z" fill="#e8e8e8"/></svg>
<svg style="left:1868.4px;top:1092.6px;" width="16" height="11.6" viewBox="0 0 16 11.6"><rect x="0" y="0" width="16" height="11.6" rx="1" fill="#cfcfcf"/><circle cx="8" cy="5.8" r="3.3" fill="#4d4d4d"/></svg>
<svg style="left:1902.2px;top:1091.8px;" width="14" height="14" viewBox="0 0 14 14"><circle cx="6.8" cy="6.8" r="6" fill="none" stroke="#cfcfcf" stroke-width="1.3"/><path d="M2.55 11.05 A6 6 0 0 0 11.05 2.55z" fill="#cfcfcf"/></svg>
<svg style="left:1915px;top:1104.4px;" width="5" height="3.4" viewBox="0 0 5 3.4"><path d="M0.2 0.2 H4.6 L2.4 3z" fill="#e8e8e8"/></svg>
<svg style="left:1933px;top:1091.6px;" width="15.4" height="13.4" viewBox="0 0 15.4 13.4"><path d="M0.4 1.4 Q0.4 0.4 1.4 0.4 H6 L7.4 2.4 H14 Q15 2.4 15 3.4 V12 Q15 13 14 13 H1.4 Q0.4 13 0.4 12z" fill="#cfcfcf"/></svg>
<svg style="left:1966.6px;top:1091.6px;" width="14" height="14.4" viewBox="0 0 14 14.4"><rect x="0.7" y="0.7" width="12.4" height="13" fill="none" stroke="#cfcfcf" stroke-width="1.3"/><path d="M6.9 3.8 V10.6 M3.5 7.2 H10.3" stroke="#cfcfcf" stroke-width="1.3"/></svg>
<svg style="left:1998.6px;top:1090.8px;" width="13.4" height="15.6" viewBox="0 0 13.4 15.6"><path d="M0.4 3 H13 M4.6 2.6 V0.7 H8.8 V2.6" fill="none" stroke="#cfcfcf" stroke-width="1.3"/><path d="M1.8 3.4 L2.6 14.8 H10.8 L11.6 3.4" fill="none" stroke="#cfcfcf" stroke-width="1.3"/><path d="M4.9 5.6 V12.6 M6.7 5.6 V12.6 M8.5 5.6 V12.6" stroke="#cfcfcf" stroke-width="1"/></svg>
</body></html>
